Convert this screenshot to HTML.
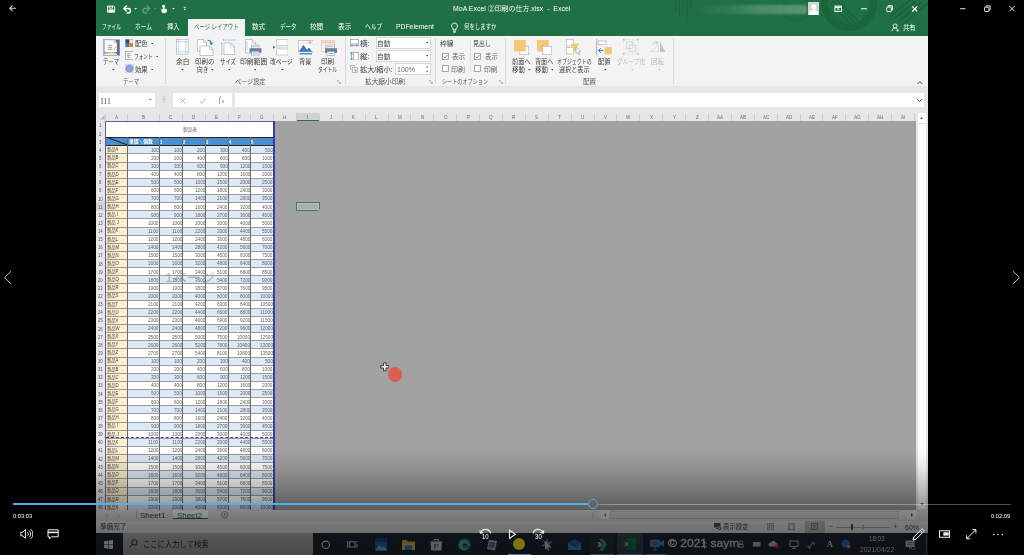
<!DOCTYPE html>
<html lang="ja"><head><meta charset="utf-8"><title>MoA Excel</title>
<style>
*{margin:0;padding:0;box-sizing:border-box}
html,body{width:1024px;height:555px;overflow:hidden;background:#000}
body{position:relative;font-family:"Liberation Sans","Noto Sans CJK JP",sans-serif;color:#444}
.a{position:absolute}
.t{position:absolute;white-space:nowrap;line-height:1;transform-origin:0 50%}
#vid{position:absolute;left:96px;top:0;width:832px;height:555px;background:#a2a2a2;overflow:hidden}
#vid .in{position:absolute;left:-96px;top:0;width:1024px;height:555px;will-change:transform;filter:blur(.35px)}
#pl{position:absolute;left:0;top:0;width:1024px;height:555px;will-change:transform}
.sep{position:absolute;width:1px;background:#d8d8d8;top:38px;height:46px}
</style></head><body>
<div id="vid"><div class="in">

<div class="a" style="left:96px;top:0;width:832px;height:35.800px;background:#1f7044"></div>
<svg class="a" style="left:700px;top:0" width="228" height="36" viewBox="0 0 228 36">
<circle cx="149" cy="3" r="24.500" fill="none" stroke="#1b643c" stroke-width="7"/>
<circle cx="96" cy="8" r="13" fill="none" stroke="#1e6c42" stroke-width="3"/>
<g stroke="#1b643c" stroke-width="1.700"><path d="M122 2l26 26M127 0l27 27M132 0l26 26M137 0l24 24M190 16l20-16M194 19l22-18M198 22l24-20M202 25l26-22"/></g>
</svg>
<div class="a" style="left:690px;top:4.800px;width:117px;height:9.400px;border-radius:3px;background:linear-gradient(90deg,rgba(255,255,255,0),rgba(255,255,255,.07) 30%,rgba(255,255,255,.2) 60%,rgba(255,255,255,.27));filter:blur(1.2px)"></div>
<svg class="a" style="left:670px;top:0" width="24" height="24" viewBox="0 0 24 24" stroke="#1b6840" stroke-width="1.300"><path d="M6 0v11M9.500 0v17M13 0v14M17 0v22M20.500 0v8"/></svg>
<svg class="a" style="left:96px;top:0" width="100" height="19" viewBox="96 0 100 19" fill="none" stroke="#fff">
<path d="M107.500 6.100h6.300l.8.800v5.200h-7.100z" stroke-width="1"/><path d="M109 6.100v2h3.600v-2" stroke-width=".9"/><path d="M108.800 12v-2.300h4.600V12z" fill="#fff" stroke-width=".6"/>
<path d="M124.600 8.400h3.500a2.300 2.300 0 0 1 0 4.600h-1.500" stroke-width="1.500"/><path d="M126.700 5.500l-2.900 2.900 2.900 2.900" stroke-width="1.400"/>
<path d="M134.400 8l1.300 1.500 1.300-1.500z" fill="#fff" stroke="none"/>
<g opacity=".32"><path d="M148.800 8.400h-3.500a2.300 2.300 0 0 0 0 4.600h1.500" stroke-width="1.400"/><path d="M146.700 5.500l2.900 2.900-2.900 2.900" stroke-width="1.300"/><path d="M154.400 8.100l1 1.100 1-1.100z" fill="#fff" stroke="none"/></g>
<circle cx="163.600" cy="6.300" r="1.500" fill="#fff" stroke="none"/><path d="M163.600 6.500v4.500" stroke-width="1.400"/><path d="M161.300 9.700l1.200 3h3.600l.8-3-3-1z" fill="#fff" stroke-width=".6"/>
<path d="M172.200 8l1.300 1.500 1.300-1.500z" fill="#fff" stroke="none"/>
<path d="M183.600 8.800l1.200 1.400 1.200-1.400z" fill="#fff" stroke="none"/><path d="M183.700 7.300h2.200" stroke-width=".8"/>
</svg>
<div class="t" style="left:452.85px;top:5px;font-size:7px;color:#fff;transform:scaleX(0.992);">MoA Excel ②印刷の仕方.xlsx&nbsp; -&nbsp; Excel</div>
<svg class="a" style="left:807.500px;top:1.900px" width="11.500" height="13.100" viewBox="0 0 11.500 13.100"><rect width="11.500" height="13.100" fill="#d4d4d4"/><circle cx="5.750" cy="4.700" r="2.500" fill="#fff"/><path d="M1.200 13.100c0-3.600 1.800-5.200 4.550-5.200s4.550 1.600 4.550 5.200z" fill="#fff"/></svg>
<svg class="a" style="left:828px;top:0" width="100" height="19" viewBox="828 0 100 19" fill="none" stroke="#fff" stroke-width="1">
<rect x="834.900" y="6.100" width="6.600" height="5.300"/><path d="M834.900 7.300h6.600" stroke-width="1.300"/><path d="M838.200 10.600V8.400M837 9.500l1.200-1.200 1.200 1.200" stroke-width=".8"/>
<path d="M861 8.750h5.900"/>
<rect x="886.700" y="7" width="4.600" height="4.600" rx=".8"/><path d="M888.100 7V5.700h4.200v4.400h-1"/>
<path d="M912.100 6.300l5.200 5.200M917.300 6.300l-5.200 5.200" stroke-width="1.100"/>
</svg>
<div class="a" style="left:188.200px;top:18.900px;width:56.800px;height:17px;background:#f3f3f3"></div>
<div class="t" style="left:194.07px;top:23px;font-size:7.2px;color:#217346;transform:scaleX(0.752);">ページ レイアウト</div>
<div class="t" style="left:102.19px;top:23px;font-size:7.2px;color:#fff;transform:scaleX(0.661);">ファイル</div>
<div class="t" style="left:135.45px;top:23px;font-size:7.2px;color:#fff;transform:scaleX(0.790);">ホーム</div>
<div class="t" style="left:166.93px;top:23px;font-size:7.2px;color:#fff;transform:scaleX(0.880);">挿入</div>
<div class="t" style="left:252.42px;top:23px;font-size:7.2px;color:#fff;transform:scaleX(0.921);">数式</div>
<div class="t" style="left:280.27px;top:23px;font-size:7.2px;color:#fff;transform:scaleX(0.770);">データ</div>
<div class="t" style="left:310.32px;top:23px;font-size:7.2px;color:#fff;transform:scaleX(0.919);">校閲</div>
<div class="t" style="left:337.52px;top:23px;font-size:7.2px;color:#fff;transform:scaleX(0.931);">表示</div>
<div class="t" style="left:364.65px;top:23px;font-size:7.2px;color:#fff;transform:scaleX(0.795);">ヘルプ</div>
<div class="t" style="left:395.78px;top:23px;font-size:7.2px;color:#fff;transform:scaleX(0.947);">PDFelement</div>
<div class="t" style="left:463.86px;top:23px;font-size:7.2px;color:#fff;transform:scaleX(0.753);">何をしますか</div>
<svg class="a" style="left:449px;top:21.500px" width="11" height="11" viewBox="0 0 11 11" fill="none" stroke="#fff" stroke-width=".9"><path d="M5.500 1a2.900 2.900 0 0 0-1.500 5.400V8h3V6.400A2.900 2.900 0 0 0 5.500 1z"/><path d="M4.200 9.300h2.600M4.600 10.400h1.800"/></svg>
<svg class="a"  style="left:891.300px;top:23px" width="9" height="9" viewBox="0 0 10 10" fill="none" stroke="#fff" stroke-width=".9"><circle cx="4.600" cy="3.300" r="2.200"/><path d="M1 9.200c.2-2.200 1.500-3.500 3.600-3.500 1 0 1.700.2 2.200.7M7.400 6.500v3.200M5.800 8.100h3.200"/></svg>
<div class="t" style="left:903.00px;top:25px;font-size:6.4px;color:#fff;transform:scaleX(0.996);">共有</div>
<div class="a" style="left:96px;top:35.800px;width:832px;height:50.400px;background:#f3f3f3"></div>
<div class="a" style="left:96px;top:86.200px;width:832px;height:27px;background:#e6e6e6"></div>
<svg class="a" style="left:102.600px;top:38.500px" width="17.400" height="17.200" viewBox="0 0 34.800 34.400">
<rect x="0" y="0" width="34.800" height="34.400" fill="#aab7c9"/>
<rect x="26" y="2" width="7" height="30" fill="#5b6b82"/>
<path d="M3 2h19l6 6v24H3z" fill="#fff" stroke="#9aa7b8" stroke-width="1"/>
<path d="M22 2v6h6" fill="#dfe5ee" stroke="#9aa7b8" stroke-width="1"/>
<path d="M9 13h10M9 17h10M9 21h10M12 11v12M16 11v12" stroke="#8a8a8a" stroke-width="1"/>
<path d="M22 22l4-7" stroke="#8a8a8a" stroke-width="1.200"/>
<rect x="3" y="26" width="3.600" height="3" fill="#2b7cd3"/><rect x="7.600" y="26" width="3.600" height="3" fill="#e8792b"/><rect x="12.200" y="26" width="3.600" height="3" fill="#e2b428"/><rect x="16.800" y="26" width="3.600" height="3" fill="#e2b428"/><rect x="21.400" y="26" width="3.600" height="3" fill="#56a64b"/><rect x="25" y="26" width="3" height="3" fill="#2b7cd3"/>
</svg>
<div class="t" style="left:103.44px;top:59px;font-size:6.5px;color:#3b3b3b;transform:scaleX(0.822);">テーマ</div>
<svg class="a" style="left:111.95px;top:69.10px" width="2.600" height="1.700" viewBox="0 0 4 2.400"><path d="M0 0h4L2 2.400z" fill="#4a4a4a"/></svg>
<svg class="a" style="left:124.700px;top:38.700px" width="8.600" height="8.500" viewBox="0 0 17.200 17"><rect x=".5" y=".5" width="16.200" height="16" fill="#e6e6e6" stroke="#9a9a9a"/><rect x="1" y="1" width="7.600" height="7" fill="#34466a"/><rect x="1" y="8" width="7.600" height="8" fill="#3e74c8"/><rect x="8.600" y="8" width="7.600" height="8" fill="#ee7d31"/></svg>
<div class="t" style="left:134.91px;top:41px;font-size:6.5px;color:#3b3b3b;transform:scaleX(0.976);">配色</div>
<svg class="a" style="left:150.9px;top:42.50px" width="2.600" height="1.700" viewBox="0 0 4 2.400"><path d="M0 0h4L2 2.400z" fill="#4a4a4a"/></svg>
<svg class="a" style="left:124.700px;top:51.400px" width="8.800" height="8.900" viewBox="0 0 17.600 17.800"><rect x=".7" y=".7" width="16.200" height="16.400" fill="#fdfdfd" stroke="#8a8a8a" stroke-width="1.200"/><path d="M4 5.600h9M4 9h9M4 12.400h9M6.500 4v10" stroke="#8e8e8e" stroke-width="1.100"/></svg>
<div class="t" style="left:134.43px;top:54px;font-size:6.5px;color:#3b3b3b;transform:scaleX(0.717);">フォント</div>
<svg class="a" style="left:155.9px;top:55.50px" width="2.600" height="1.700" viewBox="0 0 4 2.400"><path d="M0 0h4L2 2.400z" fill="#4a4a4a"/></svg>
<svg class="a" style="left:124.700px;top:64.300px" width="8.900" height="9.100" viewBox="0 0 17.800 18.200"><rect x=".5" y=".5" width="16.800" height="17.200" fill="#f6f6f6" stroke="#b5b5b5"/><circle cx="8.900" cy="9.100" r="7.300" fill="#8aa2e2" stroke="#6f8ad6"/></svg>
<div class="t" style="left:134.91px;top:67px;font-size:6.5px;color:#3b3b3b;transform:scaleX(0.976);">効果</div>
<svg class="a" style="left:150.9px;top:68.60px" width="2.600" height="1.700" viewBox="0 0 4 2.400"><path d="M0 0h4L2 2.400z" fill="#4a4a4a"/></svg>
<div class="t" style="left:122.63px;top:79px;font-size:6.4px;color:#555;transform:scaleX(0.838);">テーマ</div>
<div class="sep" style="left:165.200px"></div>
<svg class="a" style="left:176px;top:39.200px" width="12.500" height="15.500" viewBox="0 0 25 31" fill="none"><rect x=".7" y=".7" width="23.600" height="29.600" fill="#fff" stroke="#a8a8a8" stroke-width="1.200"/><path d="M5.500 1v29M19.500 1v29M1 5.500h23M1 25.500h23" stroke="#8bbbe6" stroke-width="1.100"/></svg>
<div class="t" style="left:175.69px;top:59px;font-size:6.5px;color:#3b3b3b;transform:scaleX(1.055);">余白</div>
<svg class="a" style="left:181px;top:69.10px" width="2.600" height="1.700" viewBox="0 0 4 2.400"><path d="M0 0h4L2 2.400z" fill="#4a4a4a"/></svg>
<svg class="a" style="left:197px;top:38.600px" width="16.600" height="17" viewBox="0 0 33.200 34" fill="none"><path d="M1 1h12l6 6v17H1z" fill="#fff" stroke="#a0a0a0" stroke-width="1.200"/><path d="M13 1v6h6" stroke="#a0a0a0" stroke-width="1"/><path d="M6 14h19l7 7v12H6z" fill="#fff" stroke="#a0a0a0" stroke-width="1.200"/><path d="M25 14v7h7" stroke="#a0a0a0" stroke-width="1"/><path d="M21 2.500c5 0 7.500 2.500 7.500 7" stroke="#2f75c0" stroke-width="2.400"/><path d="M24.500 7.500l4 5 4-5z" fill="#2f75c0"/></svg>
<div class="t" style="left:194.80px;top:59px;font-size:6.5px;color:#3b3b3b;transform:scaleX(0.997);">印刷の</div>
<div class="t" style="left:196.72px;top:67px;font-size:6.5px;color:#3b3b3b;transform:scaleX(0.870);">向き</div>
<svg class="a" style="left:211.2px;top:69.30px" width="2.600" height="1.700" viewBox="0 0 4 2.400"><path d="M0 0h4L2 2.400z" fill="#4a4a4a"/></svg>
<svg class="a" style="left:220.700px;top:39.200px" width="14.100" height="16.200" viewBox="0 0 28.200 32.400" fill="none"><path d="M5 2h22M5 0v4M27 0v4" stroke="#8bbbe6" stroke-width="1.200"/><path d="M1.500 8v23M0 8h3M0 31h3" stroke="#8bbbe6" stroke-width="1.200"/><path d="M6 8h13l8 8v15H6z" fill="#fff" stroke="#a0a0a0" stroke-width="1.200"/><path d="M19 8v8h8" stroke="#a0a0a0" stroke-width="1"/></svg>
<div class="t" style="left:219.54px;top:59px;font-size:6.5px;color:#3b3b3b;transform:scaleX(0.827);">サイズ</div>
<svg class="a" style="left:227.8px;top:69.10px" width="2.600" height="1.700" viewBox="0 0 4 2.400"><path d="M0 0h4L2 2.400z" fill="#4a4a4a"/></svg>
<svg class="a" style="left:245.400px;top:39.200px" width="17" height="16.400" viewBox="0 0 34 32.800" fill="none"><path d="M1 1h13l7 7v20H1z" fill="#fff" stroke="#a0a0a0" stroke-width="1.200"/><path d="M14 1v7h7" stroke="#a0a0a0" stroke-width="1"/><path d="M4 4v21" stroke="#8bbbe6" stroke-width="1.200"/><rect x="13" y="12" width="15" height="8" fill="#fff" stroke="#8a8a8a" stroke-width="1.100"/><rect x="9" y="18.500" width="24" height="9" fill="#6d7f99"/><rect x="13" y="24.500" width="15" height="7.500" fill="#fff" stroke="#8a8a8a" stroke-width="1.100"/><path d="M15 15.500h11M15 28h11" stroke="#4a8fd0" stroke-width="1.200"/></svg>
<div class="t" style="left:239.77px;top:59px;font-size:6.5px;color:#3b3b3b;transform:scaleX(1.046);">印刷範囲</div>
<svg class="a" style="left:253.7px;top:69.10px" width="2.600" height="1.700" viewBox="0 0 4 2.400"><path d="M0 0h4L2 2.400z" fill="#4a4a4a"/></svg>
<svg class="a" style="left:272.700px;top:39.200px" width="15.600" height="16.400" viewBox="0 0 31.200 32.800" fill="none"><path d="M7 1h23v12H7z" fill="#fff" stroke="#b0b0b0" stroke-width="1.200"/><path d="M7 20h23v12H7z" fill="#fff" stroke="#b0b0b0" stroke-width="1.200"/><path d="M6 16.500h25" stroke="#bdbdbd" stroke-width="1"/><path d="M0 13l5 3.500-5 3.500z" fill="#2f75c0"/></svg>
<div class="t" style="left:269.51px;top:59px;font-size:6.5px;color:#3b3b3b;transform:scaleX(0.884);">改ページ</div>
<svg class="a" style="left:281.4px;top:69.10px" width="2.600" height="1.700" viewBox="0 0 4 2.400"><path d="M0 0h4L2 2.400z" fill="#4a4a4a"/></svg>
<svg class="a" style="left:297.500px;top:39.900px" width="15.500" height="14.800" viewBox="0 0 31 29.600" fill="none"><rect x=".6" y=".6" width="29.800" height="23" fill="#fff" stroke="#a8a8a8" stroke-width="1.200"/><path d="M1 7h29M10 1v6M20 1v6" stroke="#c4c4c4" stroke-width=".9"/><circle cx="24" cy="4.600" r="2.400" fill="#f0b22a"/><path d="M1.500 23.500l9.500-14 7 10 3.500-4.500 7.500 8.500z" fill="#3b78bd"/><path d="M3 26h25v3H3z" fill="#5a8fcc"/></svg>
<div class="t" style="left:299.41px;top:59px;font-size:6.5px;color:#3b3b3b;transform:scaleX(0.944);">背景</div>
<svg class="a" style="left:320.700px;top:39.900px" width="16.600" height="15.800" viewBox="0 0 33.200 31.600" fill="none"><rect x=".6" y=".6" width="26" height="22" fill="#fff" stroke="#b5b5b5" stroke-width="1.100"/><rect x="1" y="1" width="25" height="5" fill="#f6d9c8"/><path d="M1 6h25M1 11h25M1 16h25M9 1v21M18 1v21" stroke="#e8a888" stroke-width="1"/><rect x="12" y="10" width="15" height="8" fill="#fff" stroke="#8a8a8a" stroke-width="1.100"/><rect x="8" y="16.500" width="24" height="9.500" fill="#6d7f99"/><rect x="12" y="23" width="15" height="8" fill="#fff" stroke="#8a8a8a" stroke-width="1.100"/><path d="M14 13.500h11M14 27h11" stroke="#4a8fd0" stroke-width="1.200"/></svg>
<div class="t" style="left:321.40px;top:59px;font-size:6.5px;color:#3b3b3b;transform:scaleX(1.004);">印刷</div>
<div class="t" style="left:318.40px;top:67px;font-size:6.5px;color:#3b3b3b;transform:scaleX(0.736);">タイトル</div>
<div class="t" style="left:234.67px;top:79px;font-size:6.4px;color:#555;transform:scaleX(0.958);">ページ設定</div>
<svg class="a" style="left:337.4px;top:80.2px" width="3.600" height="3.600" viewBox="0 0 7 7" fill="none" stroke="#777" stroke-width="1"><path d="M.5 4V.5H4M3 3l3.500 3.500M6.500 3.800v2.700H3.800"/></svg>
<div class="sep" style="left:344.500px"></div>
<svg class="a" style="left:350px;top:39.200px" width="8.800" height="8" viewBox="0 0 17.600 16" fill="none"><rect x=".8" y=".8" width="16" height="9" fill="#fff" stroke="#8a8a8a" stroke-width="1.200"/><path d="M1 13h15.600M1 10.500v5M16.600 10.500v5M6 11.500l-3 1.500 3 1.500M11.600 11.500l3 1.500-3 1.500" stroke="#2f75c0" stroke-width="1.100"/></svg>
<div class="t" style="left:360.46px;top:41px;font-size:6.5px;color:#3b3b3b;transform:scaleX(1.173);">横:</div>
<div class="a" style="left:375.6px;top:37.4px;width:55.7px;height:11.9px;background:#fff;border:1px solid #d6d6d6"></div>
<div class="t" style="left:377.12px;top:41px;font-size:6.5px;color:#3b3b3b;transform:scaleX(1.030);">自動</div>
<svg class="a" style="left:425.9px;top:42.40px" width="2.600" height="1.700" viewBox="0 0 4 2.400"><path d="M0 0h4L2 2.400z" fill="#4a4a4a"/></svg>
<svg class="a" style="left:350px;top:51.700px" width="8.800" height="8.400" viewBox="0 0 17.600 16.800" fill="none"><rect x="7" y=".8" width="9.800" height="15.200" fill="#fff" stroke="#8a8a8a" stroke-width="1.200"/><path d="M3 1v15M.5 1h5M.5 16h5M1.500 5l1.500-3 1.500 3M1.500 12l1.500 3 1.500-3" stroke="#2f75c0" stroke-width="1.100"/></svg>
<div class="t" style="left:360.46px;top:54px;font-size:6.5px;color:#3b3b3b;transform:scaleX(1.173);">縦:</div>
<div class="a" style="left:375.6px;top:50.2px;width:55.7px;height:12px;background:#fff;border:1px solid #d6d6d6"></div>
<div class="t" style="left:377.12px;top:54px;font-size:6.5px;color:#3b3b3b;transform:scaleX(1.030);">自動</div>
<svg class="a" style="left:425.9px;top:55.30px" width="2.600" height="1.700" viewBox="0 0 4 2.400"><path d="M0 0h4L2 2.400z" fill="#4a4a4a"/></svg>
<svg class="a" style="left:350px;top:65px" width="7.600" height="7.800" viewBox="0 0 15.200 15.600" fill="none"><rect x=".7" y=".7" width="7.600" height="7.600" fill="#fff" stroke="#8a8a8a" stroke-width="1.100"/><rect x="5" y="5" width="9.500" height="9.800" fill="#fff" stroke="#8a8a8a" stroke-width="1.100"/><path d="M8 8l4 4M12.400 9v3.400H9" stroke="#2f75c0" stroke-width="1.200"/></svg>
<div class="t" style="left:360.48px;top:67px;font-size:6.5px;color:#3b3b3b;transform:scaleX(1.099);">拡大/縮小:</div>
<div class="a" style="left:395.2px;top:63px;width:36.1px;height:12.3px;background:#fff;border:1px solid #d6d6d6"></div>
<div class="t" style="left:396.71px;top:67px;font-size:6.5px;color:#6a6a6a;transform:scaleX(1.087);">100%</div>
<svg class="a" style="left:425.500px;top:65.800px" width="2.400" height="6.400" viewBox="0 0 3.400 9"><path d="M0 2.200h3.400L1.700 0zM0 6.800h3.400L1.700 9z" fill="#555"/></svg>
<div class="t" style="left:365.49px;top:79px;font-size:6.4px;color:#555;transform:scaleX(1.043);">拡大縮小印刷</div>
<svg class="a" style="left:429.2px;top:80.2px" width="3.600" height="3.600" viewBox="0 0 7 7" fill="none" stroke="#777" stroke-width="1"><path d="M.5 4V.5H4M3 3l3.500 3.500M6.500 3.800v2.700H3.800"/></svg>
<div class="sep" style="left:435.400px"></div>
<div class="t" style="left:439.89px;top:41px;font-size:6.5px;color:#3b3b3b;transform:scaleX(1.024);">枠線</div>
<div class="t" style="left:473.42px;top:41px;font-size:6.5px;color:#3b3b3b;transform:scaleX(0.908);">見出し</div>
<div class="a" style="left:470.400px;top:39.600px;width:1px;height:32px;background:#e2e2e2"></div>
<svg class="a" style="left:441.8px;top:52.7px" width="7" height="7" viewBox="0 0 14 14" fill="none"><rect x=".8" y=".8" width="12.400" height="12.400" fill="#fff" stroke="#7a7a7a" stroke-width="1.300"/><path d="M3 7l3 3 5-6.500" stroke="#555" stroke-width="1.400"/></svg>
<div class="t" style="left:451.90px;top:54px;font-size:6.5px;color:#666;transform:scaleX(1.008);">表示</div>
<svg class="a" style="left:474.4px;top:52.7px" width="7" height="7" viewBox="0 0 14 14" fill="none"><rect x=".8" y=".8" width="12.400" height="12.400" fill="#fff" stroke="#7a7a7a" stroke-width="1.300"/><path d="M3 7l3 3 5-6.500" stroke="#555" stroke-width="1.400"/></svg>
<div class="t" style="left:485.00px;top:54px;font-size:6.5px;color:#666;transform:scaleX(0.984);">表示</div>
<svg class="a" style="left:441.8px;top:65.4px" width="7" height="7" viewBox="0 0 14 14" fill="none"><rect x=".8" y=".8" width="12.400" height="12.400" fill="#fff" stroke="#7a7a7a" stroke-width="1.300"/></svg>
<div class="t" style="left:451.35px;top:67px;font-size:6.5px;color:#666;transform:scaleX(1.072);">印刷</div>
<svg class="a" style="left:474.4px;top:65.4px" width="7" height="7" viewBox="0 0 14 14" fill="none"><rect x=".8" y=".8" width="12.400" height="12.400" fill="#fff" stroke="#7a7a7a" stroke-width="1.300"/></svg>
<div class="t" style="left:484.46px;top:67px;font-size:6.5px;color:#666;transform:scaleX(1.047);">印刷</div>
<div class="t" style="left:442.35px;top:79px;font-size:6.4px;color:#555;transform:scaleX(0.800);">シートのオプション</div>
<svg class="a" style="left:499.2px;top:80.2px" width="3.600" height="3.600" viewBox="0 0 7 7" fill="none" stroke="#777" stroke-width="1"><path d="M.5 4V.5H4M3 3l3.500 3.500M6.500 3.800v2.700H3.800"/></svg>
<div class="sep" style="left:505.400px"></div>
<svg class="a" style="left:513.700px;top:39.500px" width="15.200" height="15.200" viewBox="0 0 30.400 30.400"><rect x="11.600" y="12.600" width="18" height="17" fill="#fff" stroke="#a8a8a8" stroke-width="1.200"/><rect x="0" y="0" width="23.600" height="22.600" fill="#f2c877"/></svg>
<div class="t" style="left:512.21px;top:59px;font-size:6.5px;color:#3b3b3b;transform:scaleX(0.947);">前面へ</div>
<div class="t" style="left:512.20px;top:67px;font-size:6.5px;color:#3b3b3b;transform:scaleX(0.992);">移動</div>
<svg class="a" style="left:528.1px;top:69.30px" width="2.600" height="1.700" viewBox="0 0 4 2.400"><path d="M0 0h4L2 2.400z" fill="#4a4a4a"/></svg>
<svg class="a" style="left:536.800px;top:39.500px" width="15.200" height="15.200" viewBox="0 0 30.400 30.400"><rect x="0" y="0" width="23.600" height="22.600" fill="#f2c877"/><rect x="11.600" y="12.600" width="18" height="17" fill="#fff" stroke="#a8a8a8" stroke-width="1.200"/></svg>
<div class="t" style="left:534.92px;top:59px;font-size:6.5px;color:#3b3b3b;transform:scaleX(0.937);">背面へ</div>
<div class="t" style="left:534.90px;top:67px;font-size:6.5px;color:#3b3b3b;transform:scaleX(0.992);">移動</div>
<svg class="a" style="left:551px;top:69.30px" width="2.600" height="1.700" viewBox="0 0 4 2.400"><path d="M0 0h4L2 2.400z" fill="#4a4a4a"/></svg>
<svg class="a" style="left:566.200px;top:39.200px" width="15.400" height="16.400" viewBox="0 0 30.800 32.800" fill="none"><rect x=".7" y=".7" width="14" height="13" fill="#fff" stroke="#b0b0b0" stroke-width="1.200"/><rect x=".7" y="17" width="14" height="13" fill="#fff" stroke="#b0b0b0" stroke-width="1.200"/><path d="M10 9h15v6h-4v9h-6v-9h-5z" fill="#f2c877"/><path d="M20 16v13l3-2.600 2.200 5 2.400-1-2.200-5h4.400z" fill="#fff" stroke="#8a8a8a" stroke-width="1.100"/></svg>
<div class="t" style="left:556.67px;top:59px;font-size:6.5px;color:#3b3b3b;transform:scaleX(0.760);">オブジェクトの</div>
<div class="t" style="left:558.91px;top:67px;font-size:6.5px;color:#3b3b3b;transform:scaleX(0.941);">選択と表示</div>
<svg class="a" style="left:596.200px;top:39.200px" width="15.800" height="16.400" viewBox="0 0 31.600 32.800" fill="none"><path d="M1.200 0v32.800" stroke="#9a9a9a" stroke-width="1.600"/><rect x="5" y="4" width="15" height="7" fill="#fff" stroke="#a8a8a8" stroke-width="1.200"/><rect x="17" y="16" width="14.600" height="14.600" fill="#f2c877"/><path d="M15 23H5M9.500 18.500L5 23l4.500 4.500" stroke="#2f75c0" stroke-width="2"/></svg>
<div class="t" style="left:598.01px;top:59px;font-size:6.5px;color:#3b3b3b;transform:scaleX(0.976);">配置</div>
<svg class="a" style="left:604.3px;top:69.10px" width="2.600" height="1.700" viewBox="0 0 4 2.400"><path d="M0 0h4L2 2.400z" fill="#4a4a4a"/></svg>
<svg class="a" style="left:623px;top:39.200px" width="15.800" height="16.400" viewBox="0 0 31.600 32.800" fill="none" stroke="#c6c6c6" stroke-width="1.200"><rect x="1.500" y="1.500" width="28.600" height="28.600" stroke-dasharray="2.500 3"/><rect x="7" y="6" width="13" height="13"/><rect x="12.500" y="12" width="13" height="13"/><g fill="#bdbdbd" stroke="none"><rect x="0" y="0" width="3" height="3"/><rect x="28.600" y="0" width="3" height="3"/><rect x="0" y="28.600" width="3" height="3"/><rect x="28.600" y="28.600" width="3" height="3"/></g></svg>
<div class="t" style="left:616.61px;top:59px;font-size:6.5px;color:#b8b8b8;transform:scaleX(0.883);">グループ化</div>
<svg class="a" style="left:631.1px;top:69.10px" width="2.600" height="1.700" viewBox="0 0 4 2.400"><path d="M0 0h4L2 2.400z" fill="#c8c8c8"/></svg>
<svg class="a" style="left:650px;top:40.600px" width="15.600" height="11.200" viewBox="0 0 31.200 22.400" fill="none"><path d="M20 2l11 20H20z" fill="#c4c4c4"/><path d="M17 8L1 21.500h16z" stroke="#d0d0d0" stroke-width="1.200"/><path d="M5 7c2-4 6-5.500 10-3.500M12.500.5l3.500 3.500-4.500 2.500" stroke="#bdbdbd" stroke-width="1.700"/></svg>
<div class="t" style="left:650.85px;top:59px;font-size:6.5px;color:#b8b8b8;transform:scaleX(1.004);">回転</div>
<svg class="a" style="left:658px;top:69.10px" width="2.600" height="1.700" viewBox="0 0 4 2.400"><path d="M0 0h4L2 2.400z" fill="#c8c8c8"/></svg>
<div class="t" style="left:582.59px;top:79px;font-size:6.4px;color:#555;transform:scaleX(1.029);">配置</div>
<div class="sep" style="left:673px"></div>
<svg class="a" style="left:917.400px;top:80.900px" width="5.800" height="3.600" viewBox="0 0 5.800 3.600" fill="none" stroke="#505050" stroke-width="1"><path d="M.4 3.200L2.900.6l2.500 2.600"/></svg>
<div class="a" style="left:99px;top:93px;width:56px;height:14.200px;background:#fff"></div>
<div class="t" style="left:100.70px;top:98px;font-size:7.8px;font-family:'Liberation Serif','Noto Serif CJK JP',serif;color:#555;transform:scaleX(1.000);">I11</div>
<svg class="a" style="left:149px;top:98.800px" width="2.600" height="1.600" viewBox="0 0 3.400 2"><path d="M0 0h3.400L1.700 2z" fill="#666"/></svg>
<svg class="a" style="left:162.500px;top:96.300px" width="2" height="7" viewBox="0 0 2 7" fill="#999"><circle cx="1" cy="1" r=".6"/><circle cx="1" cy="3.400" r=".6"/><circle cx="1" cy="5.800" r=".6"/></svg>
<div class="a" style="left:172.500px;top:93px;width:59.700px;height:14.200px;background:#fff"></div>
<svg class="a" style="left:178.500px;top:96.500px" width="50" height="8" viewBox="0 0 50 8" fill="none" stroke="#b0b0b0" stroke-width=".9"><path d="M1 1l5.400 5.400M6.400 1L1 6.400"/><path d="M20.800 4l2 2.400 4-5.200"/></svg>
<div class="t" style="left:218.95px;top:95px;font-size:8.6px;font-family:'Liberation Serif','Noto Serif CJK JP',serif;font-style:italic;color:#444;transform:scaleX(0.600);">f</div>
<div class="t" style="left:221.95px;top:98px;font-size:6px;font-family:'Liberation Serif','Noto Serif CJK JP',serif;font-style:italic;color:#444;transform:scaleX(0.727);">x</div>
<div class="a" style="left:234.700px;top:93px;width:689.600px;height:14.200px;background:#fff"></div>
<svg class="a" style="left:917.300px;top:98.500px" width="5" height="3.400" viewBox="0 0 5 3.400" fill="none" stroke="#444" stroke-width="1"><path d="M.4.400l2.100 2.200L4.600.4"/></svg>
<div class="a" style="left:96px;top:113px;width:820px;height:8.100px;background:#e6e6e6"></div>
<svg class="a" style="left:100.300px;top:115.300px" width="4.600" height="4.600" viewBox="0 0 5 5"><path d="M5 0v5H0z" fill="#b7b7b7"/></svg>
<div class="a" style="left:105.20px;top:114px;width:1px;height:7px;background:#cdcdcd"></div>
<div class="t" style="left:115.11px;top:115px;font-size:5.2px;color:#6a6a6a;transform:scaleX(0.880);">A</div>
<div class="a" style="left:127.10px;top:114px;width:1px;height:7px;background:#cdcdcd"></div>
<div class="t" style="left:141.65px;top:115px;font-size:5.2px;color:#6a6a6a;transform:scaleX(0.880);">B</div>
<div class="a" style="left:158.50px;top:114px;width:1px;height:7px;background:#cdcdcd"></div>
<div class="t" style="left:169.20px;top:115px;font-size:5.2px;color:#6a6a6a;transform:scaleX(0.880);">C</div>
<div class="a" style="left:182.20px;top:114px;width:1px;height:7px;background:#cdcdcd"></div>
<div class="t" style="left:192.34px;top:115px;font-size:5.2px;color:#6a6a6a;transform:scaleX(0.880);">D</div>
<div class="a" style="left:205.00px;top:114px;width:1px;height:7px;background:#cdcdcd"></div>
<div class="t" style="left:215.30px;top:115px;font-size:5.2px;color:#6a6a6a;transform:scaleX(0.880);">E</div>
<div class="a" style="left:227.90px;top:114px;width:1px;height:7px;background:#cdcdcd"></div>
<div class="t" style="left:237.91px;top:115px;font-size:5.2px;color:#6a6a6a;transform:scaleX(0.880);">F</div>
<div class="a" style="left:250.00px;top:114px;width:1px;height:7px;background:#cdcdcd"></div>
<div class="t" style="left:260.14px;top:115px;font-size:5.2px;color:#6a6a6a;transform:scaleX(0.880);">G</div>
<div class="a" style="left:272.80px;top:114px;width:1px;height:7px;background:#cdcdcd"></div>
<div class="t" style="left:283.25px;top:115px;font-size:5.2px;color:#6a6a6a;transform:scaleX(0.880);">H</div>
<div class="a" style="left:296.49px;top:113px;width:22.89px;height:8.100px;background:#d2d2d2;border-bottom:1px solid #217346"></div>
<div class="a" style="left:295.99px;top:114px;width:1px;height:7px;background:#cdcdcd"></div>
<div class="t" style="left:307.27px;top:115px;font-size:5.2px;color:#217346;transform:scaleX(0.880);">I</div>
<div class="a" style="left:318.88px;top:114px;width:1px;height:7px;background:#cdcdcd"></div>
<div class="t" style="left:329.83px;top:115px;font-size:5.2px;color:#6a6a6a;transform:scaleX(0.880);">J</div>
<div class="a" style="left:341.77px;top:114px;width:1px;height:7px;background:#cdcdcd"></div>
<div class="t" style="left:352.07px;top:115px;font-size:5.2px;color:#6a6a6a;transform:scaleX(0.880);">K</div>
<div class="a" style="left:364.66px;top:114px;width:1px;height:7px;background:#cdcdcd"></div>
<div class="t" style="left:375.18px;top:115px;font-size:5.2px;color:#6a6a6a;transform:scaleX(0.880);">L</div>
<div class="a" style="left:387.55px;top:114px;width:1px;height:7px;background:#cdcdcd"></div>
<div class="t" style="left:397.51px;top:115px;font-size:5.2px;color:#6a6a6a;transform:scaleX(0.880);">M</div>
<div class="a" style="left:410.44px;top:114px;width:1px;height:7px;background:#cdcdcd"></div>
<div class="t" style="left:420.74px;top:115px;font-size:5.2px;color:#6a6a6a;transform:scaleX(0.880);">N</div>
<div class="a" style="left:433.33px;top:114px;width:1px;height:7px;background:#cdcdcd"></div>
<div class="t" style="left:443.51px;top:115px;font-size:5.2px;color:#6a6a6a;transform:scaleX(0.880);">O</div>
<div class="a" style="left:456.22px;top:114px;width:1px;height:7px;background:#cdcdcd"></div>
<div class="t" style="left:466.52px;top:115px;font-size:5.2px;color:#6a6a6a;transform:scaleX(0.880);">P</div>
<div class="a" style="left:479.11px;top:114px;width:1px;height:7px;background:#cdcdcd"></div>
<div class="t" style="left:489.30px;top:115px;font-size:5.2px;color:#6a6a6a;transform:scaleX(0.880);">Q</div>
<div class="a" style="left:502.00px;top:114px;width:1px;height:7px;background:#cdcdcd"></div>
<div class="t" style="left:512.18px;top:115px;font-size:5.2px;color:#6a6a6a;transform:scaleX(0.880);">R</div>
<div class="a" style="left:524.89px;top:114px;width:1px;height:7px;background:#cdcdcd"></div>
<div class="t" style="left:535.30px;top:115px;font-size:5.2px;color:#6a6a6a;transform:scaleX(0.880);">S</div>
<div class="a" style="left:547.78px;top:114px;width:1px;height:7px;background:#cdcdcd"></div>
<div class="t" style="left:558.40px;top:115px;font-size:5.2px;color:#6a6a6a;transform:scaleX(0.880);">T</div>
<div class="a" style="left:570.67px;top:114px;width:1px;height:7px;background:#cdcdcd"></div>
<div class="t" style="left:580.97px;top:115px;font-size:5.2px;color:#6a6a6a;transform:scaleX(0.880);">U</div>
<div class="a" style="left:593.56px;top:114px;width:1px;height:7px;background:#cdcdcd"></div>
<div class="t" style="left:603.97px;top:115px;font-size:5.2px;color:#6a6a6a;transform:scaleX(0.880);">V</div>
<div class="a" style="left:616.45px;top:114px;width:1px;height:7px;background:#cdcdcd"></div>
<div class="t" style="left:626.30px;top:115px;font-size:5.2px;color:#6a6a6a;transform:scaleX(0.880);">W</div>
<div class="a" style="left:639.34px;top:114px;width:1px;height:7px;background:#cdcdcd"></div>
<div class="t" style="left:649.75px;top:115px;font-size:5.2px;color:#6a6a6a;transform:scaleX(0.880);">X</div>
<div class="a" style="left:662.23px;top:114px;width:1px;height:7px;background:#cdcdcd"></div>
<div class="t" style="left:672.63px;top:115px;font-size:5.2px;color:#6a6a6a;transform:scaleX(0.880);">Y</div>
<div class="a" style="left:685.12px;top:114px;width:1px;height:7px;background:#cdcdcd"></div>
<div class="t" style="left:695.64px;top:115px;font-size:5.2px;color:#6a6a6a;transform:scaleX(0.880);">Z</div>
<div class="a" style="left:708.01px;top:114px;width:1px;height:7px;background:#cdcdcd"></div>
<div class="t" style="left:716.87px;top:115px;font-size:5.2px;color:#6a6a6a;transform:scaleX(0.880);">AA</div>
<div class="a" style="left:730.90px;top:114px;width:1px;height:7px;background:#cdcdcd"></div>
<div class="t" style="left:739.88px;top:115px;font-size:5.2px;color:#6a6a6a;transform:scaleX(0.880);">AB</div>
<div class="a" style="left:753.79px;top:114px;width:1px;height:7px;background:#cdcdcd"></div>
<div class="t" style="left:762.65px;top:115px;font-size:5.2px;color:#6a6a6a;transform:scaleX(0.880);">AC</div>
<div class="a" style="left:776.68px;top:114px;width:1px;height:7px;background:#cdcdcd"></div>
<div class="t" style="left:785.54px;top:115px;font-size:5.2px;color:#6a6a6a;transform:scaleX(0.880);">AD</div>
<div class="a" style="left:799.57px;top:114px;width:1px;height:7px;background:#cdcdcd"></div>
<div class="t" style="left:808.55px;top:115px;font-size:5.2px;color:#6a6a6a;transform:scaleX(0.880);">AE</div>
<div class="a" style="left:822.46px;top:114px;width:1px;height:7px;background:#cdcdcd"></div>
<div class="t" style="left:831.54px;top:115px;font-size:5.2px;color:#6a6a6a;transform:scaleX(0.880);">AF</div>
<div class="a" style="left:845.35px;top:114px;width:1px;height:7px;background:#cdcdcd"></div>
<div class="t" style="left:854.11px;top:115px;font-size:5.2px;color:#6a6a6a;transform:scaleX(0.880);">AG</div>
<div class="a" style="left:868.24px;top:114px;width:1px;height:7px;background:#cdcdcd"></div>
<div class="t" style="left:877.21px;top:115px;font-size:5.2px;color:#6a6a6a;transform:scaleX(0.880);">AH</div>
<div class="a" style="left:891.13px;top:114px;width:1px;height:7px;background:#cdcdcd"></div>
<div class="t" style="left:901.10px;top:115px;font-size:5.2px;color:#6a6a6a;transform:scaleX(0.880);">AI</div>
<div class="a" style="left:914.02px;top:114px;width:1px;height:7px;background:#cdcdcd"></div>
<div class="a" style="left:96px;top:121.2px;width:9.500px;height:388.500px;background:#e6e6e6"></div>
<div class="t" style="left:99.43px;top:123px;font-size:5px;color:#555;transform:scaleX(0.850);">1</div>
<div class="t" style="left:99.43px;top:132px;font-size:5px;color:#555;transform:scaleX(0.850);">2</div>
<div class="t" style="left:99.43px;top:140px;font-size:5px;color:#555;transform:scaleX(0.850);">3</div>
<div class="t" style="left:99.43px;top:148px;font-size:5px;color:#555;transform:scaleX(0.850);">4</div>
<div class="t" style="left:99.43px;top:156px;font-size:5px;color:#555;transform:scaleX(0.850);">5</div>
<div class="t" style="left:99.43px;top:164px;font-size:5px;color:#555;transform:scaleX(0.850);">6</div>
<div class="t" style="left:99.43px;top:172px;font-size:5px;color:#555;transform:scaleX(0.850);">7</div>
<div class="t" style="left:99.43px;top:180px;font-size:5px;color:#555;transform:scaleX(0.850);">8</div>
<div class="t" style="left:99.43px;top:188px;font-size:5px;color:#555;transform:scaleX(0.850);">9</div>
<div class="t" style="left:98.26px;top:197px;font-size:5px;color:#555;transform:scaleX(0.850);">10</div>
<div class="a" style="left:96px;top:202.45px;width:9.500px;height:8.125px;background:#d2d2d2;border-right:1px solid #217346"></div>
<div class="t" style="left:98.37px;top:205px;font-size:5px;color:#217346;transform:scaleX(0.850);">11</div>
<div class="t" style="left:98.26px;top:213px;font-size:5px;color:#555;transform:scaleX(0.850);">12</div>
<div class="t" style="left:98.26px;top:221px;font-size:5px;color:#555;transform:scaleX(0.850);">13</div>
<div class="t" style="left:98.16px;top:229px;font-size:5px;color:#555;transform:scaleX(0.850);">14</div>
<div class="t" style="left:98.26px;top:237px;font-size:5px;color:#555;transform:scaleX(0.850);">15</div>
<div class="t" style="left:98.26px;top:245px;font-size:5px;color:#555;transform:scaleX(0.850);">16</div>
<div class="t" style="left:98.26px;top:253px;font-size:5px;color:#555;transform:scaleX(0.850);">17</div>
<div class="t" style="left:98.26px;top:262px;font-size:5px;color:#555;transform:scaleX(0.850);">18</div>
<div class="t" style="left:98.26px;top:270px;font-size:5px;color:#555;transform:scaleX(0.850);">19</div>
<div class="t" style="left:98.26px;top:278px;font-size:5px;color:#555;transform:scaleX(0.850);">20</div>
<div class="t" style="left:98.26px;top:286px;font-size:5px;color:#555;transform:scaleX(0.850);">21</div>
<div class="t" style="left:98.26px;top:294px;font-size:5px;color:#555;transform:scaleX(0.850);">22</div>
<div class="t" style="left:98.26px;top:302px;font-size:5px;color:#555;transform:scaleX(0.850);">23</div>
<div class="t" style="left:98.16px;top:310px;font-size:5px;color:#555;transform:scaleX(0.850);">24</div>
<div class="t" style="left:98.26px;top:318px;font-size:5px;color:#555;transform:scaleX(0.850);">25</div>
<div class="t" style="left:98.26px;top:327px;font-size:5px;color:#555;transform:scaleX(0.850);">26</div>
<div class="t" style="left:98.26px;top:335px;font-size:5px;color:#555;transform:scaleX(0.850);">27</div>
<div class="t" style="left:98.26px;top:343px;font-size:5px;color:#555;transform:scaleX(0.850);">28</div>
<div class="t" style="left:98.26px;top:351px;font-size:5px;color:#555;transform:scaleX(0.850);">29</div>
<div class="t" style="left:98.26px;top:359px;font-size:5px;color:#555;transform:scaleX(0.850);">30</div>
<div class="t" style="left:98.26px;top:367px;font-size:5px;color:#555;transform:scaleX(0.850);">31</div>
<div class="t" style="left:98.26px;top:375px;font-size:5px;color:#555;transform:scaleX(0.850);">32</div>
<div class="t" style="left:98.26px;top:383px;font-size:5px;color:#555;transform:scaleX(0.850);">33</div>
<div class="t" style="left:98.16px;top:392px;font-size:5px;color:#555;transform:scaleX(0.850);">34</div>
<div class="t" style="left:98.26px;top:400px;font-size:5px;color:#555;transform:scaleX(0.850);">35</div>
<div class="t" style="left:98.26px;top:408px;font-size:5px;color:#555;transform:scaleX(0.850);">36</div>
<div class="t" style="left:98.26px;top:416px;font-size:5px;color:#555;transform:scaleX(0.850);">37</div>
<div class="t" style="left:98.26px;top:424px;font-size:5px;color:#555;transform:scaleX(0.850);">38</div>
<div class="t" style="left:98.26px;top:432px;font-size:5px;color:#555;transform:scaleX(0.850);">39</div>
<div class="t" style="left:98.37px;top:440px;font-size:5px;color:#555;transform:scaleX(0.850);">40</div>
<div class="t" style="left:98.37px;top:448px;font-size:5px;color:#555;transform:scaleX(0.850);">41</div>
<div class="t" style="left:98.37px;top:457px;font-size:5px;color:#555;transform:scaleX(0.850);">42</div>
<div class="t" style="left:98.37px;top:465px;font-size:5px;color:#555;transform:scaleX(0.850);">43</div>
<div class="t" style="left:98.26px;top:473px;font-size:5px;color:#555;transform:scaleX(0.850);">44</div>
<div class="t" style="left:98.37px;top:481px;font-size:5px;color:#555;transform:scaleX(0.850);">45</div>
<div class="t" style="left:98.37px;top:489px;font-size:5px;color:#555;transform:scaleX(0.850);">46</div>
<div class="t" style="left:98.37px;top:497px;font-size:5px;color:#555;transform:scaleX(0.850);">47</div>
<div class="t" style="left:98.37px;top:505px;font-size:5px;color:#555;transform:scaleX(0.850);">48</div>
<div class="a" style="left:105.7px;top:121.2px;width:167.60000000000002px;height:390px;background:#fff"></div>
<div class="t" style="left:182.51px;top:128px;font-size:4.9px;color:#555;transform:scaleX(0.961);">製品表</div>
<div class="a" style="left:105.7px;top:137.45px;width:167.60000000000002px;height:8.125px;background:#4a8fd2"></div>
<svg class="a" style="left:105.7px;top:137.45px" width="21.9" height="8.125" viewBox="0 0 21.900 8.140"><path d="M0 0L21.900 8.140" stroke="#1a1a1a" stroke-width="1"/></svg>
<div class="t" style="left:129.10px;top:140px;font-size:4.8px;font-weight:bold;color:#fff;transform:scaleX(0.991);">単価＼個数</div>
<div class="t" style="left:159.69px;top:141px;font-size:4.9px;font-weight:bold;color:#fff;transform:scaleX(0.850);">1</div>
<div class="t" style="left:183.39px;top:141px;font-size:4.9px;font-weight:bold;color:#fff;transform:scaleX(0.850);">2</div>
<div class="t" style="left:206.19px;top:141px;font-size:4.9px;font-weight:bold;color:#fff;transform:scaleX(0.850);">3</div>
<div class="t" style="left:229.30px;top:141px;font-size:4.9px;font-weight:bold;color:#fff;transform:scaleX(0.850);">4</div>
<div class="t" style="left:251.19px;top:141px;font-size:4.9px;font-weight:bold;color:#fff;transform:scaleX(0.850);">5</div>
<div class="a" style="left:127.6px;top:145.57px;width:145.7px;height:8.125px;background:#dce9f7"></div>
<div class="a" style="left:105.7px;top:145.57px;width:21.9px;height:8.125px;background:#fdf0cf"></div>
<div class="t" style="left:106.78px;top:148px;font-size:4.9px;color:#3a3a3a;transform:scaleX(0.880);">製品A</div>
<div class="t" style="left:150.60px;top:148px;font-size:5.9px;color:#646464;transform:scaleX(0.800);">100</div>
<div class="t" style="left:174.30px;top:148px;font-size:5.9px;color:#646464;transform:scaleX(0.800);">100</div>
<div class="t" style="left:197.10px;top:148px;font-size:5.9px;color:#646464;transform:scaleX(0.800);">200</div>
<div class="t" style="left:220.00px;top:148px;font-size:5.9px;color:#646464;transform:scaleX(0.800);">300</div>
<div class="t" style="left:242.10px;top:148px;font-size:5.9px;color:#646464;transform:scaleX(0.800);">400</div>
<div class="t" style="left:264.90px;top:148px;font-size:5.9px;color:#646464;transform:scaleX(0.800);">500</div>
<div class="a" style="left:127.6px;top:153.70px;width:145.7px;height:8.125px;background:#fff"></div>
<div class="a" style="left:105.7px;top:153.70px;width:21.9px;height:8.125px;background:#fdf0cf"></div>
<div class="t" style="left:106.78px;top:156px;font-size:4.9px;color:#3a3a3a;transform:scaleX(0.880);">製品B</div>
<div class="t" style="left:150.60px;top:156px;font-size:5.9px;color:#646464;transform:scaleX(0.800);">200</div>
<div class="t" style="left:174.30px;top:156px;font-size:5.9px;color:#646464;transform:scaleX(0.800);">200</div>
<div class="t" style="left:197.10px;top:156px;font-size:5.9px;color:#646464;transform:scaleX(0.800);">400</div>
<div class="t" style="left:220.00px;top:156px;font-size:5.9px;color:#646464;transform:scaleX(0.800);">600</div>
<div class="t" style="left:242.10px;top:156px;font-size:5.9px;color:#646464;transform:scaleX(0.800);">800</div>
<div class="t" style="left:262.30px;top:156px;font-size:5.9px;color:#646464;transform:scaleX(0.800);">1000</div>
<div class="a" style="left:127.6px;top:161.82px;width:145.7px;height:8.125px;background:#dce9f7"></div>
<div class="a" style="left:105.7px;top:161.82px;width:21.9px;height:8.125px;background:#fdf0cf"></div>
<div class="t" style="left:106.78px;top:164px;font-size:4.9px;color:#3a3a3a;transform:scaleX(0.880);">製品C</div>
<div class="t" style="left:150.60px;top:164px;font-size:5.9px;color:#646464;transform:scaleX(0.800);">300</div>
<div class="t" style="left:174.30px;top:164px;font-size:5.9px;color:#646464;transform:scaleX(0.800);">300</div>
<div class="t" style="left:197.10px;top:164px;font-size:5.9px;color:#646464;transform:scaleX(0.800);">600</div>
<div class="t" style="left:220.00px;top:164px;font-size:5.9px;color:#646464;transform:scaleX(0.800);">900</div>
<div class="t" style="left:239.50px;top:164px;font-size:5.9px;color:#646464;transform:scaleX(0.800);">1200</div>
<div class="t" style="left:262.30px;top:164px;font-size:5.9px;color:#646464;transform:scaleX(0.800);">1500</div>
<div class="a" style="left:127.6px;top:169.95px;width:145.7px;height:8.125px;background:#fff"></div>
<div class="a" style="left:105.7px;top:169.95px;width:21.9px;height:8.125px;background:#fdf0cf"></div>
<div class="t" style="left:106.78px;top:173px;font-size:4.9px;color:#3a3a3a;transform:scaleX(0.880);">製品D</div>
<div class="t" style="left:150.60px;top:172px;font-size:5.9px;color:#646464;transform:scaleX(0.800);">400</div>
<div class="t" style="left:174.30px;top:172px;font-size:5.9px;color:#646464;transform:scaleX(0.800);">400</div>
<div class="t" style="left:197.10px;top:172px;font-size:5.9px;color:#646464;transform:scaleX(0.800);">800</div>
<div class="t" style="left:217.40px;top:172px;font-size:5.9px;color:#646464;transform:scaleX(0.800);">1200</div>
<div class="t" style="left:239.50px;top:172px;font-size:5.9px;color:#646464;transform:scaleX(0.800);">1600</div>
<div class="t" style="left:262.30px;top:172px;font-size:5.9px;color:#646464;transform:scaleX(0.800);">2000</div>
<div class="a" style="left:127.6px;top:178.07px;width:145.7px;height:8.125px;background:#dce9f7"></div>
<div class="a" style="left:105.7px;top:178.07px;width:21.9px;height:8.125px;background:#fdf0cf"></div>
<div class="t" style="left:106.78px;top:181px;font-size:4.9px;color:#3a3a3a;transform:scaleX(0.880);">製品E</div>
<div class="t" style="left:150.60px;top:180px;font-size:5.9px;color:#646464;transform:scaleX(0.800);">500</div>
<div class="t" style="left:174.30px;top:180px;font-size:5.9px;color:#646464;transform:scaleX(0.800);">500</div>
<div class="t" style="left:194.50px;top:180px;font-size:5.9px;color:#646464;transform:scaleX(0.800);">1000</div>
<div class="t" style="left:217.40px;top:180px;font-size:5.9px;color:#646464;transform:scaleX(0.800);">1500</div>
<div class="t" style="left:239.50px;top:180px;font-size:5.9px;color:#646464;transform:scaleX(0.800);">2000</div>
<div class="t" style="left:262.30px;top:180px;font-size:5.9px;color:#646464;transform:scaleX(0.800);">2500</div>
<div class="a" style="left:127.6px;top:186.20px;width:145.7px;height:8.125px;background:#fff"></div>
<div class="a" style="left:105.7px;top:186.20px;width:21.9px;height:8.125px;background:#fdf0cf"></div>
<div class="t" style="left:106.78px;top:189px;font-size:4.9px;color:#3a3a3a;transform:scaleX(0.880);">製品F</div>
<div class="t" style="left:150.60px;top:188px;font-size:5.9px;color:#646464;transform:scaleX(0.800);">600</div>
<div class="t" style="left:174.30px;top:188px;font-size:5.9px;color:#646464;transform:scaleX(0.800);">600</div>
<div class="t" style="left:194.50px;top:188px;font-size:5.9px;color:#646464;transform:scaleX(0.800);">1200</div>
<div class="t" style="left:217.40px;top:188px;font-size:5.9px;color:#646464;transform:scaleX(0.800);">1800</div>
<div class="t" style="left:239.50px;top:188px;font-size:5.9px;color:#646464;transform:scaleX(0.800);">2400</div>
<div class="t" style="left:262.30px;top:188px;font-size:5.9px;color:#646464;transform:scaleX(0.800);">3000</div>
<div class="a" style="left:127.6px;top:194.32px;width:145.7px;height:8.125px;background:#dce9f7"></div>
<div class="a" style="left:105.7px;top:194.32px;width:21.9px;height:8.125px;background:#fdf0cf"></div>
<div class="t" style="left:106.78px;top:197px;font-size:4.9px;color:#3a3a3a;transform:scaleX(0.880);">製品G</div>
<div class="t" style="left:150.60px;top:196px;font-size:5.9px;color:#646464;transform:scaleX(0.800);">700</div>
<div class="t" style="left:174.30px;top:196px;font-size:5.9px;color:#646464;transform:scaleX(0.800);">700</div>
<div class="t" style="left:194.50px;top:196px;font-size:5.9px;color:#646464;transform:scaleX(0.800);">1400</div>
<div class="t" style="left:217.40px;top:196px;font-size:5.9px;color:#646464;transform:scaleX(0.800);">2100</div>
<div class="t" style="left:239.50px;top:196px;font-size:5.9px;color:#646464;transform:scaleX(0.800);">2800</div>
<div class="t" style="left:262.30px;top:196px;font-size:5.9px;color:#646464;transform:scaleX(0.800);">3500</div>
<div class="a" style="left:127.6px;top:202.45px;width:145.7px;height:8.125px;background:#fff"></div>
<div class="a" style="left:105.7px;top:202.45px;width:21.9px;height:8.125px;background:#fdf0cf"></div>
<div class="t" style="left:106.78px;top:205px;font-size:4.9px;color:#3a3a3a;transform:scaleX(0.880);">製品H</div>
<div class="t" style="left:150.60px;top:205px;font-size:5.9px;color:#646464;transform:scaleX(0.800);">800</div>
<div class="t" style="left:174.30px;top:205px;font-size:5.9px;color:#646464;transform:scaleX(0.800);">800</div>
<div class="t" style="left:194.50px;top:205px;font-size:5.9px;color:#646464;transform:scaleX(0.800);">1600</div>
<div class="t" style="left:217.40px;top:205px;font-size:5.9px;color:#646464;transform:scaleX(0.800);">2400</div>
<div class="t" style="left:239.50px;top:205px;font-size:5.9px;color:#646464;transform:scaleX(0.800);">3200</div>
<div class="t" style="left:262.30px;top:205px;font-size:5.9px;color:#646464;transform:scaleX(0.800);">4000</div>
<div class="a" style="left:127.6px;top:210.57px;width:145.7px;height:8.125px;background:#dce9f7"></div>
<div class="a" style="left:105.7px;top:210.57px;width:21.9px;height:8.125px;background:#fdf0cf"></div>
<div class="t" style="left:106.78px;top:213px;font-size:4.9px;color:#3a3a3a;transform:scaleX(0.880);">製品&nbsp;I</div>
<div class="t" style="left:150.60px;top:213px;font-size:5.9px;color:#646464;transform:scaleX(0.800);">900</div>
<div class="t" style="left:174.30px;top:213px;font-size:5.9px;color:#646464;transform:scaleX(0.800);">900</div>
<div class="t" style="left:194.50px;top:213px;font-size:5.9px;color:#646464;transform:scaleX(0.800);">1800</div>
<div class="t" style="left:217.40px;top:213px;font-size:5.9px;color:#646464;transform:scaleX(0.800);">2700</div>
<div class="t" style="left:239.50px;top:213px;font-size:5.9px;color:#646464;transform:scaleX(0.800);">3600</div>
<div class="t" style="left:262.30px;top:213px;font-size:5.9px;color:#646464;transform:scaleX(0.800);">4500</div>
<div class="a" style="left:127.6px;top:218.70px;width:145.7px;height:8.125px;background:#fff"></div>
<div class="a" style="left:105.7px;top:218.70px;width:21.9px;height:8.125px;background:#fdf0cf"></div>
<div class="t" style="left:106.78px;top:221px;font-size:4.9px;color:#3a3a3a;transform:scaleX(0.880);">製品&nbsp;J</div>
<div class="t" style="left:148.00px;top:221px;font-size:5.9px;color:#646464;transform:scaleX(0.800);">1000</div>
<div class="t" style="left:171.70px;top:221px;font-size:5.9px;color:#646464;transform:scaleX(0.800);">1000</div>
<div class="t" style="left:194.50px;top:221px;font-size:5.9px;color:#646464;transform:scaleX(0.800);">2000</div>
<div class="t" style="left:217.40px;top:221px;font-size:5.9px;color:#646464;transform:scaleX(0.800);">3000</div>
<div class="t" style="left:239.50px;top:221px;font-size:5.9px;color:#646464;transform:scaleX(0.800);">4000</div>
<div class="t" style="left:262.30px;top:221px;font-size:5.9px;color:#646464;transform:scaleX(0.800);">5000</div>
<div class="a" style="left:127.6px;top:226.82px;width:145.7px;height:8.125px;background:#dce9f7"></div>
<div class="a" style="left:105.7px;top:226.82px;width:21.9px;height:8.125px;background:#fdf0cf"></div>
<div class="t" style="left:106.78px;top:229px;font-size:4.9px;color:#3a3a3a;transform:scaleX(0.880);">製品K</div>
<div class="t" style="left:148.40px;top:229px;font-size:5.9px;color:#646464;transform:scaleX(0.800);">1100</div>
<div class="t" style="left:172.10px;top:229px;font-size:5.9px;color:#646464;transform:scaleX(0.800);">1100</div>
<div class="t" style="left:194.50px;top:229px;font-size:5.9px;color:#646464;transform:scaleX(0.800);">2200</div>
<div class="t" style="left:217.40px;top:229px;font-size:5.9px;color:#646464;transform:scaleX(0.800);">3300</div>
<div class="t" style="left:239.50px;top:229px;font-size:5.9px;color:#646464;transform:scaleX(0.800);">4400</div>
<div class="t" style="left:262.30px;top:229px;font-size:5.9px;color:#646464;transform:scaleX(0.800);">5500</div>
<div class="a" style="left:127.6px;top:234.95px;width:145.7px;height:8.125px;background:#fff"></div>
<div class="a" style="left:105.7px;top:234.95px;width:21.9px;height:8.125px;background:#fdf0cf"></div>
<div class="t" style="left:106.78px;top:238px;font-size:4.9px;color:#3a3a3a;transform:scaleX(0.880);">製品L</div>
<div class="t" style="left:148.00px;top:237px;font-size:5.9px;color:#646464;transform:scaleX(0.800);">1200</div>
<div class="t" style="left:171.70px;top:237px;font-size:5.9px;color:#646464;transform:scaleX(0.800);">1200</div>
<div class="t" style="left:194.50px;top:237px;font-size:5.9px;color:#646464;transform:scaleX(0.800);">2400</div>
<div class="t" style="left:217.40px;top:237px;font-size:5.9px;color:#646464;transform:scaleX(0.800);">3600</div>
<div class="t" style="left:239.50px;top:237px;font-size:5.9px;color:#646464;transform:scaleX(0.800);">4800</div>
<div class="t" style="left:262.30px;top:237px;font-size:5.9px;color:#646464;transform:scaleX(0.800);">6000</div>
<div class="a" style="left:127.6px;top:243.07px;width:145.7px;height:8.125px;background:#dce9f7"></div>
<div class="a" style="left:105.7px;top:243.07px;width:21.9px;height:8.125px;background:#fdf0cf"></div>
<div class="t" style="left:106.78px;top:246px;font-size:4.9px;color:#3a3a3a;transform:scaleX(0.880);">製品M</div>
<div class="t" style="left:148.00px;top:245px;font-size:5.9px;color:#646464;transform:scaleX(0.800);">1400</div>
<div class="t" style="left:171.70px;top:245px;font-size:5.9px;color:#646464;transform:scaleX(0.800);">1400</div>
<div class="t" style="left:194.50px;top:245px;font-size:5.9px;color:#646464;transform:scaleX(0.800);">2800</div>
<div class="t" style="left:217.40px;top:245px;font-size:5.9px;color:#646464;transform:scaleX(0.800);">4200</div>
<div class="t" style="left:239.50px;top:245px;font-size:5.9px;color:#646464;transform:scaleX(0.800);">5600</div>
<div class="t" style="left:262.30px;top:245px;font-size:5.9px;color:#646464;transform:scaleX(0.800);">7000</div>
<div class="a" style="left:127.6px;top:251.20px;width:145.7px;height:8.125px;background:#fff"></div>
<div class="a" style="left:105.7px;top:251.20px;width:21.9px;height:8.125px;background:#fdf0cf"></div>
<div class="t" style="left:106.78px;top:254px;font-size:4.9px;color:#3a3a3a;transform:scaleX(0.880);">製品N</div>
<div class="t" style="left:148.00px;top:253px;font-size:5.9px;color:#646464;transform:scaleX(0.800);">1500</div>
<div class="t" style="left:171.70px;top:253px;font-size:5.9px;color:#646464;transform:scaleX(0.800);">1500</div>
<div class="t" style="left:194.50px;top:253px;font-size:5.9px;color:#646464;transform:scaleX(0.800);">3000</div>
<div class="t" style="left:217.40px;top:253px;font-size:5.9px;color:#646464;transform:scaleX(0.800);">4500</div>
<div class="t" style="left:239.50px;top:253px;font-size:5.9px;color:#646464;transform:scaleX(0.800);">6000</div>
<div class="t" style="left:262.30px;top:253px;font-size:5.9px;color:#646464;transform:scaleX(0.800);">7500</div>
<div class="a" style="left:127.6px;top:259.32px;width:145.7px;height:8.125px;background:#dce9f7"></div>
<div class="a" style="left:105.7px;top:259.32px;width:21.9px;height:8.125px;background:#fdf0cf"></div>
<div class="t" style="left:106.78px;top:262px;font-size:4.9px;color:#3a3a3a;transform:scaleX(0.880);">製品O</div>
<div class="t" style="left:148.00px;top:261px;font-size:5.9px;color:#646464;transform:scaleX(0.800);">1600</div>
<div class="t" style="left:171.70px;top:261px;font-size:5.9px;color:#646464;transform:scaleX(0.800);">1600</div>
<div class="t" style="left:194.50px;top:261px;font-size:5.9px;color:#646464;transform:scaleX(0.800);">3200</div>
<div class="t" style="left:217.40px;top:261px;font-size:5.9px;color:#646464;transform:scaleX(0.800);">4800</div>
<div class="t" style="left:239.50px;top:261px;font-size:5.9px;color:#646464;transform:scaleX(0.800);">6400</div>
<div class="t" style="left:262.30px;top:261px;font-size:5.9px;color:#646464;transform:scaleX(0.800);">8000</div>
<div class="a" style="left:127.6px;top:267.45px;width:145.7px;height:8.125px;background:#fff"></div>
<div class="a" style="left:105.7px;top:267.45px;width:21.9px;height:8.125px;background:#fdf0cf"></div>
<div class="t" style="left:106.78px;top:270px;font-size:4.9px;color:#3a3a3a;transform:scaleX(0.880);">製品P</div>
<div class="t" style="left:148.00px;top:270px;font-size:5.9px;color:#646464;transform:scaleX(0.800);">1700</div>
<div class="t" style="left:171.70px;top:270px;font-size:5.9px;color:#646464;transform:scaleX(0.800);">1700</div>
<div class="t" style="left:194.50px;top:270px;font-size:5.9px;color:#646464;transform:scaleX(0.800);">3400</div>
<div class="t" style="left:217.40px;top:270px;font-size:5.9px;color:#646464;transform:scaleX(0.800);">5100</div>
<div class="t" style="left:239.50px;top:270px;font-size:5.9px;color:#646464;transform:scaleX(0.800);">6800</div>
<div class="t" style="left:262.30px;top:270px;font-size:5.9px;color:#646464;transform:scaleX(0.800);">8500</div>
<div class="a" style="left:127.6px;top:275.57px;width:145.7px;height:8.125px;background:#dce9f7"></div>
<div class="a" style="left:105.7px;top:275.57px;width:21.9px;height:8.125px;background:#fdf0cf"></div>
<div class="t" style="left:106.78px;top:278px;font-size:4.9px;color:#3a3a3a;transform:scaleX(0.880);">製品Q</div>
<div class="t" style="left:148.00px;top:278px;font-size:5.9px;color:#646464;transform:scaleX(0.800);">1800</div>
<div class="t" style="left:171.70px;top:278px;font-size:5.9px;color:#646464;transform:scaleX(0.800);">1800</div>
<div class="t" style="left:194.50px;top:278px;font-size:5.9px;color:#646464;transform:scaleX(0.800);">3600</div>
<div class="t" style="left:217.40px;top:278px;font-size:5.9px;color:#646464;transform:scaleX(0.800);">5400</div>
<div class="t" style="left:239.50px;top:278px;font-size:5.9px;color:#646464;transform:scaleX(0.800);">7200</div>
<div class="t" style="left:262.30px;top:278px;font-size:5.9px;color:#646464;transform:scaleX(0.800);">9000</div>
<div class="a" style="left:127.6px;top:283.70px;width:145.7px;height:8.125px;background:#fff"></div>
<div class="a" style="left:105.7px;top:283.70px;width:21.9px;height:8.125px;background:#fdf0cf"></div>
<div class="t" style="left:106.78px;top:286px;font-size:4.9px;color:#3a3a3a;transform:scaleX(0.880);">製品R</div>
<div class="t" style="left:148.00px;top:286px;font-size:5.9px;color:#646464;transform:scaleX(0.800);">1900</div>
<div class="t" style="left:171.70px;top:286px;font-size:5.9px;color:#646464;transform:scaleX(0.800);">1900</div>
<div class="t" style="left:194.50px;top:286px;font-size:5.9px;color:#646464;transform:scaleX(0.800);">3800</div>
<div class="t" style="left:217.40px;top:286px;font-size:5.9px;color:#646464;transform:scaleX(0.800);">5700</div>
<div class="t" style="left:239.50px;top:286px;font-size:5.9px;color:#646464;transform:scaleX(0.800);">7600</div>
<div class="t" style="left:262.30px;top:286px;font-size:5.9px;color:#646464;transform:scaleX(0.800);">9500</div>
<div class="a" style="left:127.6px;top:291.82px;width:145.7px;height:8.125px;background:#dce9f7"></div>
<div class="a" style="left:105.7px;top:291.82px;width:21.9px;height:8.125px;background:#fdf0cf"></div>
<div class="t" style="left:106.78px;top:294px;font-size:4.9px;color:#3a3a3a;transform:scaleX(0.880);">製品S</div>
<div class="t" style="left:148.00px;top:294px;font-size:5.9px;color:#646464;transform:scaleX(0.800);">2000</div>
<div class="t" style="left:171.70px;top:294px;font-size:5.9px;color:#646464;transform:scaleX(0.800);">2000</div>
<div class="t" style="left:194.50px;top:294px;font-size:5.9px;color:#646464;transform:scaleX(0.800);">4000</div>
<div class="t" style="left:217.40px;top:294px;font-size:5.9px;color:#646464;transform:scaleX(0.800);">6000</div>
<div class="t" style="left:239.50px;top:294px;font-size:5.9px;color:#646464;transform:scaleX(0.800);">8000</div>
<div class="t" style="left:259.70px;top:294px;font-size:5.9px;color:#646464;transform:scaleX(0.800);">10000</div>
<div class="a" style="left:127.6px;top:299.95px;width:145.7px;height:8.125px;background:#fff"></div>
<div class="a" style="left:105.7px;top:299.95px;width:21.9px;height:8.125px;background:#fdf0cf"></div>
<div class="t" style="left:106.78px;top:303px;font-size:4.9px;color:#3a3a3a;transform:scaleX(0.880);">製品T</div>
<div class="t" style="left:148.00px;top:302px;font-size:5.9px;color:#646464;transform:scaleX(0.800);">2100</div>
<div class="t" style="left:171.70px;top:302px;font-size:5.9px;color:#646464;transform:scaleX(0.800);">2100</div>
<div class="t" style="left:194.50px;top:302px;font-size:5.9px;color:#646464;transform:scaleX(0.800);">4200</div>
<div class="t" style="left:217.40px;top:302px;font-size:5.9px;color:#646464;transform:scaleX(0.800);">6300</div>
<div class="t" style="left:239.50px;top:302px;font-size:5.9px;color:#646464;transform:scaleX(0.800);">8400</div>
<div class="t" style="left:259.70px;top:302px;font-size:5.9px;color:#646464;transform:scaleX(0.800);">10500</div>
<div class="a" style="left:127.6px;top:308.07px;width:145.7px;height:8.125px;background:#dce9f7"></div>
<div class="a" style="left:105.7px;top:308.07px;width:21.9px;height:8.125px;background:#fdf0cf"></div>
<div class="t" style="left:106.78px;top:311px;font-size:4.9px;color:#3a3a3a;transform:scaleX(0.880);">製品U</div>
<div class="t" style="left:148.00px;top:310px;font-size:5.9px;color:#646464;transform:scaleX(0.800);">2200</div>
<div class="t" style="left:171.70px;top:310px;font-size:5.9px;color:#646464;transform:scaleX(0.800);">2200</div>
<div class="t" style="left:194.50px;top:310px;font-size:5.9px;color:#646464;transform:scaleX(0.800);">4400</div>
<div class="t" style="left:217.40px;top:310px;font-size:5.9px;color:#646464;transform:scaleX(0.800);">6600</div>
<div class="t" style="left:239.50px;top:310px;font-size:5.9px;color:#646464;transform:scaleX(0.800);">8800</div>
<div class="t" style="left:260.10px;top:310px;font-size:5.9px;color:#646464;transform:scaleX(0.800);">11000</div>
<div class="a" style="left:127.6px;top:316.20px;width:145.7px;height:8.125px;background:#fff"></div>
<div class="a" style="left:105.7px;top:316.20px;width:21.9px;height:8.125px;background:#fdf0cf"></div>
<div class="t" style="left:106.78px;top:319px;font-size:4.9px;color:#3a3a3a;transform:scaleX(0.880);">製品V</div>
<div class="t" style="left:148.00px;top:318px;font-size:5.9px;color:#646464;transform:scaleX(0.800);">2300</div>
<div class="t" style="left:171.70px;top:318px;font-size:5.9px;color:#646464;transform:scaleX(0.800);">2300</div>
<div class="t" style="left:194.50px;top:318px;font-size:5.9px;color:#646464;transform:scaleX(0.800);">4600</div>
<div class="t" style="left:217.40px;top:318px;font-size:5.9px;color:#646464;transform:scaleX(0.800);">6900</div>
<div class="t" style="left:239.50px;top:318px;font-size:5.9px;color:#646464;transform:scaleX(0.800);">9200</div>
<div class="t" style="left:260.10px;top:318px;font-size:5.9px;color:#646464;transform:scaleX(0.800);">11500</div>
<div class="a" style="left:127.6px;top:324.32px;width:145.7px;height:8.125px;background:#dce9f7"></div>
<div class="a" style="left:105.7px;top:324.32px;width:21.9px;height:8.125px;background:#fdf0cf"></div>
<div class="t" style="left:106.78px;top:327px;font-size:4.9px;color:#3a3a3a;transform:scaleX(0.880);">製品W</div>
<div class="t" style="left:148.00px;top:326px;font-size:5.9px;color:#646464;transform:scaleX(0.800);">2400</div>
<div class="t" style="left:171.70px;top:326px;font-size:5.9px;color:#646464;transform:scaleX(0.800);">2400</div>
<div class="t" style="left:194.50px;top:326px;font-size:5.9px;color:#646464;transform:scaleX(0.800);">4800</div>
<div class="t" style="left:217.40px;top:326px;font-size:5.9px;color:#646464;transform:scaleX(0.800);">7200</div>
<div class="t" style="left:239.50px;top:326px;font-size:5.9px;color:#646464;transform:scaleX(0.800);">9600</div>
<div class="t" style="left:259.70px;top:326px;font-size:5.9px;color:#646464;transform:scaleX(0.800);">12000</div>
<div class="a" style="left:127.6px;top:332.45px;width:145.7px;height:8.125px;background:#fff"></div>
<div class="a" style="left:105.7px;top:332.45px;width:21.9px;height:8.125px;background:#fdf0cf"></div>
<div class="t" style="left:106.78px;top:335px;font-size:4.9px;color:#3a3a3a;transform:scaleX(0.880);">製品X</div>
<div class="t" style="left:148.00px;top:335px;font-size:5.9px;color:#646464;transform:scaleX(0.800);">2500</div>
<div class="t" style="left:171.70px;top:335px;font-size:5.9px;color:#646464;transform:scaleX(0.800);">2500</div>
<div class="t" style="left:194.50px;top:335px;font-size:5.9px;color:#646464;transform:scaleX(0.800);">5000</div>
<div class="t" style="left:217.40px;top:335px;font-size:5.9px;color:#646464;transform:scaleX(0.800);">7500</div>
<div class="t" style="left:236.90px;top:335px;font-size:5.9px;color:#646464;transform:scaleX(0.800);">10000</div>
<div class="t" style="left:259.70px;top:335px;font-size:5.9px;color:#646464;transform:scaleX(0.800);">12500</div>
<div class="a" style="left:127.6px;top:340.57px;width:145.7px;height:8.125px;background:#dce9f7"></div>
<div class="a" style="left:105.7px;top:340.57px;width:21.9px;height:8.125px;background:#fdf0cf"></div>
<div class="t" style="left:106.78px;top:343px;font-size:4.9px;color:#3a3a3a;transform:scaleX(0.880);">製品Y</div>
<div class="t" style="left:148.00px;top:343px;font-size:5.9px;color:#646464;transform:scaleX(0.800);">2600</div>
<div class="t" style="left:171.70px;top:343px;font-size:5.9px;color:#646464;transform:scaleX(0.800);">2600</div>
<div class="t" style="left:194.50px;top:343px;font-size:5.9px;color:#646464;transform:scaleX(0.800);">5200</div>
<div class="t" style="left:217.40px;top:343px;font-size:5.9px;color:#646464;transform:scaleX(0.800);">7800</div>
<div class="t" style="left:236.90px;top:343px;font-size:5.9px;color:#646464;transform:scaleX(0.800);">10400</div>
<div class="t" style="left:259.70px;top:343px;font-size:5.9px;color:#646464;transform:scaleX(0.800);">13000</div>
<div class="a" style="left:127.6px;top:348.70px;width:145.7px;height:8.125px;background:#fff"></div>
<div class="a" style="left:105.7px;top:348.70px;width:21.9px;height:8.125px;background:#fdf0cf"></div>
<div class="t" style="left:106.78px;top:351px;font-size:4.9px;color:#3a3a3a;transform:scaleX(0.880);">製品Z</div>
<div class="t" style="left:148.00px;top:351px;font-size:5.9px;color:#646464;transform:scaleX(0.800);">2700</div>
<div class="t" style="left:171.70px;top:351px;font-size:5.9px;color:#646464;transform:scaleX(0.800);">2700</div>
<div class="t" style="left:194.50px;top:351px;font-size:5.9px;color:#646464;transform:scaleX(0.800);">5400</div>
<div class="t" style="left:217.40px;top:351px;font-size:5.9px;color:#646464;transform:scaleX(0.800);">8100</div>
<div class="t" style="left:236.90px;top:351px;font-size:5.9px;color:#646464;transform:scaleX(0.800);">10800</div>
<div class="t" style="left:259.70px;top:351px;font-size:5.9px;color:#646464;transform:scaleX(0.800);">13500</div>
<div class="a" style="left:127.6px;top:356.82px;width:145.7px;height:8.125px;background:#dce9f7"></div>
<div class="a" style="left:105.7px;top:356.82px;width:21.9px;height:8.125px;background:#fdf0cf"></div>
<div class="t" style="left:106.78px;top:359px;font-size:4.9px;color:#3a3a3a;transform:scaleX(0.880);">製品A</div>
<div class="t" style="left:150.60px;top:359px;font-size:5.9px;color:#646464;transform:scaleX(0.800);">100</div>
<div class="t" style="left:174.30px;top:359px;font-size:5.9px;color:#646464;transform:scaleX(0.800);">100</div>
<div class="t" style="left:197.10px;top:359px;font-size:5.9px;color:#646464;transform:scaleX(0.800);">200</div>
<div class="t" style="left:220.00px;top:359px;font-size:5.9px;color:#646464;transform:scaleX(0.800);">300</div>
<div class="t" style="left:242.10px;top:359px;font-size:5.9px;color:#646464;transform:scaleX(0.800);">400</div>
<div class="t" style="left:264.90px;top:359px;font-size:5.9px;color:#646464;transform:scaleX(0.800);">500</div>
<div class="a" style="left:127.6px;top:364.95px;width:145.7px;height:8.125px;background:#fff"></div>
<div class="a" style="left:105.7px;top:364.95px;width:21.9px;height:8.125px;background:#fdf0cf"></div>
<div class="t" style="left:106.78px;top:368px;font-size:4.9px;color:#3a3a3a;transform:scaleX(0.880);">製品B</div>
<div class="t" style="left:150.60px;top:367px;font-size:5.9px;color:#646464;transform:scaleX(0.800);">200</div>
<div class="t" style="left:174.30px;top:367px;font-size:5.9px;color:#646464;transform:scaleX(0.800);">200</div>
<div class="t" style="left:197.10px;top:367px;font-size:5.9px;color:#646464;transform:scaleX(0.800);">400</div>
<div class="t" style="left:220.00px;top:367px;font-size:5.9px;color:#646464;transform:scaleX(0.800);">600</div>
<div class="t" style="left:242.10px;top:367px;font-size:5.9px;color:#646464;transform:scaleX(0.800);">800</div>
<div class="t" style="left:262.30px;top:367px;font-size:5.9px;color:#646464;transform:scaleX(0.800);">1000</div>
<div class="a" style="left:127.6px;top:373.07px;width:145.7px;height:8.125px;background:#dce9f7"></div>
<div class="a" style="left:105.7px;top:373.07px;width:21.9px;height:8.125px;background:#fdf0cf"></div>
<div class="t" style="left:106.78px;top:376px;font-size:4.9px;color:#3a3a3a;transform:scaleX(0.880);">製品C</div>
<div class="t" style="left:150.60px;top:375px;font-size:5.9px;color:#646464;transform:scaleX(0.800);">300</div>
<div class="t" style="left:174.30px;top:375px;font-size:5.9px;color:#646464;transform:scaleX(0.800);">300</div>
<div class="t" style="left:197.10px;top:375px;font-size:5.9px;color:#646464;transform:scaleX(0.800);">600</div>
<div class="t" style="left:220.00px;top:375px;font-size:5.9px;color:#646464;transform:scaleX(0.800);">900</div>
<div class="t" style="left:239.50px;top:375px;font-size:5.9px;color:#646464;transform:scaleX(0.800);">1200</div>
<div class="t" style="left:262.30px;top:375px;font-size:5.9px;color:#646464;transform:scaleX(0.800);">1500</div>
<div class="a" style="left:127.6px;top:381.20px;width:145.7px;height:8.125px;background:#fff"></div>
<div class="a" style="left:105.7px;top:381.20px;width:21.9px;height:8.125px;background:#fdf0cf"></div>
<div class="t" style="left:106.78px;top:384px;font-size:4.9px;color:#3a3a3a;transform:scaleX(0.880);">製品D</div>
<div class="t" style="left:150.60px;top:383px;font-size:5.9px;color:#646464;transform:scaleX(0.800);">400</div>
<div class="t" style="left:174.30px;top:383px;font-size:5.9px;color:#646464;transform:scaleX(0.800);">400</div>
<div class="t" style="left:197.10px;top:383px;font-size:5.9px;color:#646464;transform:scaleX(0.800);">800</div>
<div class="t" style="left:217.40px;top:383px;font-size:5.9px;color:#646464;transform:scaleX(0.800);">1200</div>
<div class="t" style="left:239.50px;top:383px;font-size:5.9px;color:#646464;transform:scaleX(0.800);">1600</div>
<div class="t" style="left:262.30px;top:383px;font-size:5.9px;color:#646464;transform:scaleX(0.800);">2000</div>
<div class="a" style="left:127.6px;top:389.32px;width:145.7px;height:8.125px;background:#dce9f7"></div>
<div class="a" style="left:105.7px;top:389.32px;width:21.9px;height:8.125px;background:#fdf0cf"></div>
<div class="t" style="left:106.78px;top:392px;font-size:4.9px;color:#3a3a3a;transform:scaleX(0.880);">製品E</div>
<div class="t" style="left:150.60px;top:391px;font-size:5.9px;color:#646464;transform:scaleX(0.800);">500</div>
<div class="t" style="left:174.30px;top:391px;font-size:5.9px;color:#646464;transform:scaleX(0.800);">500</div>
<div class="t" style="left:194.50px;top:391px;font-size:5.9px;color:#646464;transform:scaleX(0.800);">1000</div>
<div class="t" style="left:217.40px;top:391px;font-size:5.9px;color:#646464;transform:scaleX(0.800);">1500</div>
<div class="t" style="left:239.50px;top:391px;font-size:5.9px;color:#646464;transform:scaleX(0.800);">2000</div>
<div class="t" style="left:262.30px;top:391px;font-size:5.9px;color:#646464;transform:scaleX(0.800);">2500</div>
<div class="a" style="left:127.6px;top:397.45px;width:145.7px;height:8.125px;background:#fff"></div>
<div class="a" style="left:105.7px;top:397.45px;width:21.9px;height:8.125px;background:#fdf0cf"></div>
<div class="t" style="left:106.78px;top:400px;font-size:4.9px;color:#3a3a3a;transform:scaleX(0.880);">製品F</div>
<div class="t" style="left:150.60px;top:400px;font-size:5.9px;color:#646464;transform:scaleX(0.800);">600</div>
<div class="t" style="left:174.30px;top:400px;font-size:5.9px;color:#646464;transform:scaleX(0.800);">600</div>
<div class="t" style="left:194.50px;top:400px;font-size:5.9px;color:#646464;transform:scaleX(0.800);">1200</div>
<div class="t" style="left:217.40px;top:400px;font-size:5.9px;color:#646464;transform:scaleX(0.800);">1800</div>
<div class="t" style="left:239.50px;top:400px;font-size:5.9px;color:#646464;transform:scaleX(0.800);">2400</div>
<div class="t" style="left:262.30px;top:400px;font-size:5.9px;color:#646464;transform:scaleX(0.800);">3000</div>
<div class="a" style="left:127.6px;top:405.57px;width:145.7px;height:8.125px;background:#dce9f7"></div>
<div class="a" style="left:105.7px;top:405.57px;width:21.9px;height:8.125px;background:#fdf0cf"></div>
<div class="t" style="left:106.78px;top:408px;font-size:4.9px;color:#3a3a3a;transform:scaleX(0.880);">製品G</div>
<div class="t" style="left:150.60px;top:408px;font-size:5.9px;color:#646464;transform:scaleX(0.800);">700</div>
<div class="t" style="left:174.30px;top:408px;font-size:5.9px;color:#646464;transform:scaleX(0.800);">700</div>
<div class="t" style="left:194.50px;top:408px;font-size:5.9px;color:#646464;transform:scaleX(0.800);">1400</div>
<div class="t" style="left:217.40px;top:408px;font-size:5.9px;color:#646464;transform:scaleX(0.800);">2100</div>
<div class="t" style="left:239.50px;top:408px;font-size:5.9px;color:#646464;transform:scaleX(0.800);">2800</div>
<div class="t" style="left:262.30px;top:408px;font-size:5.9px;color:#646464;transform:scaleX(0.800);">3500</div>
<div class="a" style="left:127.6px;top:413.70px;width:145.7px;height:8.125px;background:#fff"></div>
<div class="a" style="left:105.7px;top:413.70px;width:21.9px;height:8.125px;background:#fdf0cf"></div>
<div class="t" style="left:106.78px;top:416px;font-size:4.9px;color:#3a3a3a;transform:scaleX(0.880);">製品H</div>
<div class="t" style="left:150.60px;top:416px;font-size:5.9px;color:#646464;transform:scaleX(0.800);">800</div>
<div class="t" style="left:174.30px;top:416px;font-size:5.9px;color:#646464;transform:scaleX(0.800);">800</div>
<div class="t" style="left:194.50px;top:416px;font-size:5.9px;color:#646464;transform:scaleX(0.800);">1600</div>
<div class="t" style="left:217.40px;top:416px;font-size:5.9px;color:#646464;transform:scaleX(0.800);">2400</div>
<div class="t" style="left:239.50px;top:416px;font-size:5.9px;color:#646464;transform:scaleX(0.800);">3200</div>
<div class="t" style="left:262.30px;top:416px;font-size:5.9px;color:#646464;transform:scaleX(0.800);">4000</div>
<div class="a" style="left:127.6px;top:421.82px;width:145.7px;height:8.125px;background:#dce9f7"></div>
<div class="a" style="left:105.7px;top:421.82px;width:21.9px;height:8.125px;background:#fdf0cf"></div>
<div class="t" style="left:106.78px;top:424px;font-size:4.9px;color:#3a3a3a;transform:scaleX(0.880);">製品&nbsp;I</div>
<div class="t" style="left:150.60px;top:424px;font-size:5.9px;color:#646464;transform:scaleX(0.800);">900</div>
<div class="t" style="left:174.30px;top:424px;font-size:5.9px;color:#646464;transform:scaleX(0.800);">900</div>
<div class="t" style="left:194.50px;top:424px;font-size:5.9px;color:#646464;transform:scaleX(0.800);">1800</div>
<div class="t" style="left:217.40px;top:424px;font-size:5.9px;color:#646464;transform:scaleX(0.800);">2700</div>
<div class="t" style="left:239.50px;top:424px;font-size:5.9px;color:#646464;transform:scaleX(0.800);">3600</div>
<div class="t" style="left:262.30px;top:424px;font-size:5.9px;color:#646464;transform:scaleX(0.800);">4500</div>
<div class="a" style="left:127.6px;top:429.95px;width:145.7px;height:8.125px;background:#fff"></div>
<div class="a" style="left:105.7px;top:429.95px;width:21.9px;height:8.125px;background:#fdf0cf"></div>
<div class="t" style="left:106.78px;top:433px;font-size:4.9px;color:#3a3a3a;transform:scaleX(0.880);">製品&nbsp;J</div>
<div class="t" style="left:148.00px;top:432px;font-size:5.9px;color:#646464;transform:scaleX(0.800);">1000</div>
<div class="t" style="left:171.70px;top:432px;font-size:5.9px;color:#646464;transform:scaleX(0.800);">1000</div>
<div class="t" style="left:194.50px;top:432px;font-size:5.9px;color:#646464;transform:scaleX(0.800);">2000</div>
<div class="t" style="left:217.40px;top:432px;font-size:5.9px;color:#646464;transform:scaleX(0.800);">3000</div>
<div class="t" style="left:239.50px;top:432px;font-size:5.9px;color:#646464;transform:scaleX(0.800);">4000</div>
<div class="t" style="left:262.30px;top:432px;font-size:5.9px;color:#646464;transform:scaleX(0.800);">5000</div>
<div class="a" style="left:127.6px;top:438.07px;width:145.7px;height:8.125px;background:#dce9f7"></div>
<div class="a" style="left:105.7px;top:438.07px;width:21.9px;height:8.125px;background:#fdf0cf"></div>
<div class="t" style="left:106.78px;top:441px;font-size:4.9px;color:#3a3a3a;transform:scaleX(0.880);">製品K</div>
<div class="t" style="left:148.40px;top:440px;font-size:5.9px;color:#646464;transform:scaleX(0.800);">1100</div>
<div class="t" style="left:172.10px;top:440px;font-size:5.9px;color:#646464;transform:scaleX(0.800);">1100</div>
<div class="t" style="left:194.50px;top:440px;font-size:5.9px;color:#646464;transform:scaleX(0.800);">2200</div>
<div class="t" style="left:217.40px;top:440px;font-size:5.9px;color:#646464;transform:scaleX(0.800);">3300</div>
<div class="t" style="left:239.50px;top:440px;font-size:5.9px;color:#646464;transform:scaleX(0.800);">4400</div>
<div class="t" style="left:262.30px;top:440px;font-size:5.9px;color:#646464;transform:scaleX(0.800);">5500</div>
<div class="a" style="left:127.6px;top:446.20px;width:145.7px;height:8.125px;background:#fff"></div>
<div class="a" style="left:105.7px;top:446.20px;width:21.9px;height:8.125px;background:#fdf0cf"></div>
<div class="t" style="left:106.78px;top:449px;font-size:4.9px;color:#3a3a3a;transform:scaleX(0.880);">製品L</div>
<div class="t" style="left:148.00px;top:448px;font-size:5.9px;color:#646464;transform:scaleX(0.800);">1200</div>
<div class="t" style="left:171.70px;top:448px;font-size:5.9px;color:#646464;transform:scaleX(0.800);">1200</div>
<div class="t" style="left:194.50px;top:448px;font-size:5.9px;color:#646464;transform:scaleX(0.800);">2400</div>
<div class="t" style="left:217.40px;top:448px;font-size:5.9px;color:#646464;transform:scaleX(0.800);">3600</div>
<div class="t" style="left:239.50px;top:448px;font-size:5.9px;color:#646464;transform:scaleX(0.800);">4800</div>
<div class="t" style="left:262.30px;top:448px;font-size:5.9px;color:#646464;transform:scaleX(0.800);">6000</div>
<div class="a" style="left:127.6px;top:454.32px;width:145.7px;height:8.125px;background:#dce9f7"></div>
<div class="a" style="left:105.7px;top:454.32px;width:21.9px;height:8.125px;background:#fdf0cf"></div>
<div class="t" style="left:106.78px;top:457px;font-size:4.9px;color:#3a3a3a;transform:scaleX(0.880);">製品M</div>
<div class="t" style="left:148.00px;top:456px;font-size:5.9px;color:#646464;transform:scaleX(0.800);">1400</div>
<div class="t" style="left:171.70px;top:456px;font-size:5.9px;color:#646464;transform:scaleX(0.800);">1400</div>
<div class="t" style="left:194.50px;top:456px;font-size:5.9px;color:#646464;transform:scaleX(0.800);">2800</div>
<div class="t" style="left:217.40px;top:456px;font-size:5.9px;color:#646464;transform:scaleX(0.800);">4200</div>
<div class="t" style="left:239.50px;top:456px;font-size:5.9px;color:#646464;transform:scaleX(0.800);">5600</div>
<div class="t" style="left:262.30px;top:456px;font-size:5.9px;color:#646464;transform:scaleX(0.800);">7000</div>
<div class="a" style="left:127.6px;top:462.45px;width:145.7px;height:8.125px;background:#fff"></div>
<div class="a" style="left:105.7px;top:462.45px;width:21.9px;height:8.125px;background:#fdf0cf"></div>
<div class="t" style="left:106.78px;top:465px;font-size:4.9px;color:#3a3a3a;transform:scaleX(0.880);">製品N</div>
<div class="t" style="left:148.00px;top:465px;font-size:5.9px;color:#646464;transform:scaleX(0.800);">1500</div>
<div class="t" style="left:171.70px;top:465px;font-size:5.9px;color:#646464;transform:scaleX(0.800);">1500</div>
<div class="t" style="left:194.50px;top:465px;font-size:5.9px;color:#646464;transform:scaleX(0.800);">3000</div>
<div class="t" style="left:217.40px;top:465px;font-size:5.9px;color:#646464;transform:scaleX(0.800);">4500</div>
<div class="t" style="left:239.50px;top:465px;font-size:5.9px;color:#646464;transform:scaleX(0.800);">6000</div>
<div class="t" style="left:262.30px;top:465px;font-size:5.9px;color:#646464;transform:scaleX(0.800);">7500</div>
<div class="a" style="left:127.6px;top:470.57px;width:145.7px;height:8.125px;background:#dce9f7"></div>
<div class="a" style="left:105.7px;top:470.57px;width:21.9px;height:8.125px;background:#fdf0cf"></div>
<div class="t" style="left:106.78px;top:473px;font-size:4.9px;color:#3a3a3a;transform:scaleX(0.880);">製品O</div>
<div class="t" style="left:148.00px;top:473px;font-size:5.9px;color:#646464;transform:scaleX(0.800);">1600</div>
<div class="t" style="left:171.70px;top:473px;font-size:5.9px;color:#646464;transform:scaleX(0.800);">1600</div>
<div class="t" style="left:194.50px;top:473px;font-size:5.9px;color:#646464;transform:scaleX(0.800);">3200</div>
<div class="t" style="left:217.40px;top:473px;font-size:5.9px;color:#646464;transform:scaleX(0.800);">4800</div>
<div class="t" style="left:239.50px;top:473px;font-size:5.9px;color:#646464;transform:scaleX(0.800);">6400</div>
<div class="t" style="left:262.30px;top:473px;font-size:5.9px;color:#646464;transform:scaleX(0.800);">8000</div>
<div class="a" style="left:127.6px;top:478.70px;width:145.7px;height:8.125px;background:#fff"></div>
<div class="a" style="left:105.7px;top:478.70px;width:21.9px;height:8.125px;background:#fdf0cf"></div>
<div class="t" style="left:106.78px;top:481px;font-size:4.9px;color:#3a3a3a;transform:scaleX(0.880);">製品P</div>
<div class="t" style="left:148.00px;top:481px;font-size:5.9px;color:#646464;transform:scaleX(0.800);">1700</div>
<div class="t" style="left:171.70px;top:481px;font-size:5.9px;color:#646464;transform:scaleX(0.800);">1700</div>
<div class="t" style="left:194.50px;top:481px;font-size:5.9px;color:#646464;transform:scaleX(0.800);">3400</div>
<div class="t" style="left:217.40px;top:481px;font-size:5.9px;color:#646464;transform:scaleX(0.800);">5100</div>
<div class="t" style="left:239.50px;top:481px;font-size:5.9px;color:#646464;transform:scaleX(0.800);">6800</div>
<div class="t" style="left:262.30px;top:481px;font-size:5.9px;color:#646464;transform:scaleX(0.800);">8500</div>
<div class="a" style="left:127.6px;top:486.82px;width:145.7px;height:8.125px;background:#dce9f7"></div>
<div class="a" style="left:105.7px;top:486.82px;width:21.9px;height:8.125px;background:#fdf0cf"></div>
<div class="t" style="left:106.78px;top:489px;font-size:4.9px;color:#3a3a3a;transform:scaleX(0.880);">製品Q</div>
<div class="t" style="left:148.00px;top:489px;font-size:5.9px;color:#646464;transform:scaleX(0.800);">1800</div>
<div class="t" style="left:171.70px;top:489px;font-size:5.9px;color:#646464;transform:scaleX(0.800);">1800</div>
<div class="t" style="left:194.50px;top:489px;font-size:5.9px;color:#646464;transform:scaleX(0.800);">3600</div>
<div class="t" style="left:217.40px;top:489px;font-size:5.9px;color:#646464;transform:scaleX(0.800);">5400</div>
<div class="t" style="left:239.50px;top:489px;font-size:5.9px;color:#646464;transform:scaleX(0.800);">7200</div>
<div class="t" style="left:262.30px;top:489px;font-size:5.9px;color:#646464;transform:scaleX(0.800);">9000</div>
<div class="a" style="left:127.6px;top:494.95px;width:145.7px;height:8.125px;background:#fff"></div>
<div class="a" style="left:105.7px;top:494.95px;width:21.9px;height:8.125px;background:#fdf0cf"></div>
<div class="t" style="left:106.78px;top:498px;font-size:4.9px;color:#3a3a3a;transform:scaleX(0.880);">製品R</div>
<div class="t" style="left:148.00px;top:497px;font-size:5.9px;color:#646464;transform:scaleX(0.800);">1900</div>
<div class="t" style="left:171.70px;top:497px;font-size:5.9px;color:#646464;transform:scaleX(0.800);">1900</div>
<div class="t" style="left:194.50px;top:497px;font-size:5.9px;color:#646464;transform:scaleX(0.800);">3800</div>
<div class="t" style="left:217.40px;top:497px;font-size:5.9px;color:#646464;transform:scaleX(0.800);">5700</div>
<div class="t" style="left:239.50px;top:497px;font-size:5.9px;color:#646464;transform:scaleX(0.800);">7600</div>
<div class="t" style="left:262.30px;top:497px;font-size:5.9px;color:#646464;transform:scaleX(0.800);">9500</div>
<div class="a" style="left:127.6px;top:503.07px;width:145.7px;height:8.125px;background:#dce9f7"></div>
<div class="a" style="left:105.7px;top:503.07px;width:21.9px;height:8.125px;background:#fdf0cf"></div>
<div class="t" style="left:106.78px;top:506px;font-size:4.9px;color:#3a3a3a;transform:scaleX(0.880);">製品S</div>
<div class="t" style="left:148.00px;top:505px;font-size:5.9px;color:#646464;transform:scaleX(0.800);">2000</div>
<div class="t" style="left:171.70px;top:505px;font-size:5.9px;color:#646464;transform:scaleX(0.800);">2000</div>
<div class="t" style="left:194.50px;top:505px;font-size:5.9px;color:#646464;transform:scaleX(0.800);">4000</div>
<div class="t" style="left:217.40px;top:505px;font-size:5.9px;color:#646464;transform:scaleX(0.800);">6000</div>
<div class="t" style="left:239.50px;top:505px;font-size:5.9px;color:#646464;transform:scaleX(0.800);">8000</div>
<div class="t" style="left:259.70px;top:505px;font-size:5.9px;color:#646464;transform:scaleX(0.800);">10000</div>
<div class="a" style="left:105.7px;top:136.95px;width:167.60000000000002px;height:.9px;background:#262626"></div>
<div class="a" style="left:105.7px;top:145.07px;width:167.60000000000002px;height:.9px;background:#262626"></div>
<div class="a" style="left:105.7px;top:153.40px;width:167.60000000000002px;height:.55px;background:#9a9a9a"></div>
<div class="a" style="left:105.7px;top:161.52px;width:167.60000000000002px;height:.55px;background:#9a9a9a"></div>
<div class="a" style="left:105.7px;top:169.65px;width:167.60000000000002px;height:.55px;background:#9a9a9a"></div>
<div class="a" style="left:105.7px;top:177.77px;width:167.60000000000002px;height:.55px;background:#9a9a9a"></div>
<div class="a" style="left:105.7px;top:185.90px;width:167.60000000000002px;height:.55px;background:#9a9a9a"></div>
<div class="a" style="left:105.7px;top:194.02px;width:167.60000000000002px;height:.55px;background:#9a9a9a"></div>
<div class="a" style="left:105.7px;top:202.15px;width:167.60000000000002px;height:.55px;background:#9a9a9a"></div>
<div class="a" style="left:105.7px;top:210.27px;width:167.60000000000002px;height:.55px;background:#9a9a9a"></div>
<div class="a" style="left:105.7px;top:218.40px;width:167.60000000000002px;height:.55px;background:#9a9a9a"></div>
<div class="a" style="left:105.7px;top:226.52px;width:167.60000000000002px;height:.55px;background:#9a9a9a"></div>
<div class="a" style="left:105.7px;top:234.65px;width:167.60000000000002px;height:.55px;background:#9a9a9a"></div>
<div class="a" style="left:105.7px;top:242.77px;width:167.60000000000002px;height:.55px;background:#9a9a9a"></div>
<div class="a" style="left:105.7px;top:250.90px;width:167.60000000000002px;height:.55px;background:#9a9a9a"></div>
<div class="a" style="left:105.7px;top:259.02px;width:167.60000000000002px;height:.55px;background:#9a9a9a"></div>
<div class="a" style="left:105.7px;top:267.15px;width:167.60000000000002px;height:.55px;background:#9a9a9a"></div>
<div class="a" style="left:105.7px;top:275.27px;width:167.60000000000002px;height:.55px;background:#9a9a9a"></div>
<div class="a" style="left:105.7px;top:283.40px;width:167.60000000000002px;height:.55px;background:#9a9a9a"></div>
<div class="a" style="left:105.7px;top:291.52px;width:167.60000000000002px;height:.55px;background:#9a9a9a"></div>
<div class="a" style="left:105.7px;top:299.65px;width:167.60000000000002px;height:.55px;background:#9a9a9a"></div>
<div class="a" style="left:105.7px;top:307.77px;width:167.60000000000002px;height:.55px;background:#9a9a9a"></div>
<div class="a" style="left:105.7px;top:315.90px;width:167.60000000000002px;height:.55px;background:#9a9a9a"></div>
<div class="a" style="left:105.7px;top:324.02px;width:167.60000000000002px;height:.55px;background:#9a9a9a"></div>
<div class="a" style="left:105.7px;top:332.15px;width:167.60000000000002px;height:.55px;background:#9a9a9a"></div>
<div class="a" style="left:105.7px;top:340.27px;width:167.60000000000002px;height:.55px;background:#9a9a9a"></div>
<div class="a" style="left:105.7px;top:348.40px;width:167.60000000000002px;height:.55px;background:#9a9a9a"></div>
<div class="a" style="left:105.7px;top:356.52px;width:167.60000000000002px;height:.55px;background:#9a9a9a"></div>
<div class="a" style="left:105.7px;top:364.65px;width:167.60000000000002px;height:.55px;background:#9a9a9a"></div>
<div class="a" style="left:105.7px;top:372.77px;width:167.60000000000002px;height:.55px;background:#9a9a9a"></div>
<div class="a" style="left:105.7px;top:380.90px;width:167.60000000000002px;height:.55px;background:#9a9a9a"></div>
<div class="a" style="left:105.7px;top:389.02px;width:167.60000000000002px;height:.55px;background:#9a9a9a"></div>
<div class="a" style="left:105.7px;top:397.15px;width:167.60000000000002px;height:.55px;background:#9a9a9a"></div>
<div class="a" style="left:105.7px;top:405.27px;width:167.60000000000002px;height:.55px;background:#9a9a9a"></div>
<div class="a" style="left:105.7px;top:413.40px;width:167.60000000000002px;height:.55px;background:#9a9a9a"></div>
<div class="a" style="left:105.7px;top:421.52px;width:167.60000000000002px;height:.55px;background:#9a9a9a"></div>
<div class="a" style="left:105.7px;top:429.65px;width:167.60000000000002px;height:.55px;background:#9a9a9a"></div>
<div class="a" style="left:105.7px;top:437.77px;width:167.60000000000002px;height:.55px;background:#9a9a9a"></div>
<div class="a" style="left:105.7px;top:445.90px;width:167.60000000000002px;height:.55px;background:#9a9a9a"></div>
<div class="a" style="left:105.7px;top:454.02px;width:167.60000000000002px;height:.55px;background:#9a9a9a"></div>
<div class="a" style="left:105.7px;top:462.15px;width:167.60000000000002px;height:.55px;background:#9a9a9a"></div>
<div class="a" style="left:105.7px;top:470.27px;width:167.60000000000002px;height:.55px;background:#9a9a9a"></div>
<div class="a" style="left:105.7px;top:478.40px;width:167.60000000000002px;height:.55px;background:#9a9a9a"></div>
<div class="a" style="left:105.7px;top:486.52px;width:167.60000000000002px;height:.55px;background:#9a9a9a"></div>
<div class="a" style="left:105.7px;top:494.65px;width:167.60000000000002px;height:.55px;background:#9a9a9a"></div>
<div class="a" style="left:105.7px;top:502.77px;width:167.60000000000002px;height:.55px;background:#9a9a9a"></div>
<div class="a" style="left:127.19999999999999px;top:137.45px;width:.55px;height:380px;background:#6a6a6a"></div>
<div class="a" style="left:158.6px;top:137.45px;width:.55px;height:380px;background:#6a6a6a"></div>
<div class="a" style="left:182.29999999999998px;top:137.45px;width:.55px;height:380px;background:#6a6a6a"></div>
<div class="a" style="left:205.1px;top:137.45px;width:.55px;height:380px;background:#6a6a6a"></div>
<div class="a" style="left:228.0px;top:137.45px;width:.55px;height:380px;background:#6a6a6a"></div>
<div class="a" style="left:250.1px;top:137.45px;width:.55px;height:380px;background:#6a6a6a"></div>
<div class="t" style="left:164.76px;top:271px;font-size:13px;color:rgba(120,120,120,.5);transform:scaleX(1.092);">1ページ</div>
<div class="a" style="left:105.7px;top:437.47px;width:167.60000000000002px;height:0;border-top:1.200px dashed #3a3ab0"></div>
<div class="a" style="left:105.0px;top:120.60000000000001px;width:169.8px;height:395px;border:1px solid #5a5ab4;border-right:2px solid #3a3ab0"></div>
<div class="a" style="left:296.09000000000003px;top:202.05px;width:23.69px;height:8.925px;border:.9px solid #3a7d57;background:#adadad;box-shadow:inset 0 0 0 .7px rgba(255,255,255,.3)"></div>
<div class="a" style="left:318.08px;top:209.27px;width:2.400px;height:2.400px;background:#217346;border:.4px solid #a2a2a2"></div>
<div class="a" style="left:387.800px;top:367.200px;width:14.400px;height:14.400px;border-radius:50%;background:#dc5f54"></div>
<svg class="a" style="left:379.500px;top:362px" width="9.600" height="9.600" viewBox="0 0 9.600 9.600"><path d="M3.600.8h2.400v2.800h2.800v2.400H6v2.800H3.600V6H.8V3.600h2.800z" fill="#fff" stroke="#222" stroke-width=".9"/></svg>
<div class="a" style="left:916px;top:113px;width:12px;height:397px;background:#e6e6e6"></div>
<div class="a" style="left:917.600px;top:113.400px;width:8.800px;height:395.500px;background:#fff"></div>
<svg class="a" style="left:920.200px;top:117.200px" width="3.400" height="2" viewBox="0 0 4 2.400"><path d="M0 2.400h4L2 0z" fill="#666"/></svg>
<div class="a" style="left:917.600px;top:122.500px;width:8.600px;height:1px;background:#e0e0e0"></div>
<div class="a" style="left:96px;top:509.600px;width:832px;height:11px;background:#e6e6e6"></div>
<svg class="a" style="left:105px;top:512.500px" width="16" height="5" viewBox="0 0 16 5" fill="none" stroke="#b8b8b8" stroke-width=".9"><path d="M3.200.5l-2 2 2 2M12.400.5l2 2-2 2"/></svg>
<div class="a" style="left:136px;top:511px;width:1px;height:8px;background:#bdbdbd"></div>
<div class="a" style="left:172.500px;top:509.600px;width:35.500px;height:9.200px;background:#fff;border-bottom:1.200px solid #217346"></div>
<div class="t" style="left:140.45px;top:512px;font-size:8px;color:#444;transform:scaleX(1.004);">Sheet1</div>
<div class="t" style="left:176.75px;top:512px;font-size:8px;color:#217346;transform:scaleX(0.992);">Sheet2</div>
<svg class="a" style="left:221.300px;top:511.400px" width="7.400" height="7.400" viewBox="0 0 7.400 7.400" fill="none" stroke="#777" stroke-width=".7"><circle cx="3.700" cy="3.700" r="3.200"/><path d="M3.700 2v3.400M2 3.700h3.400"/></svg>
<svg class="a" style="left:592.400px;top:511.800px" width="2" height="7" viewBox="0 0 2 7" fill="#999"><circle cx="1" cy="1" r=".6"/><circle cx="1" cy="3.400" r=".6"/><circle cx="1" cy="5.800" r=".6"/></svg>
<div class="a" style="left:600.500px;top:510.600px;width:315px;height:8.800px;background:#ececec"></div>
<div class="a" style="left:610px;top:510.600px;width:288.600px;height:8.800px;background:#e0e0e0;border:1px solid #c8c8c8"></div>
<div class="a" style="left:600.500px;top:510.600px;width:8.500px;height:8.800px;background:#f6f6f6"></div><div class="a" style="left:907.800px;top:510.600px;width:8.200px;height:8.800px;background:#f6f6f6"></div>
<svg class="a" style="left:603.500px;top:513px" width="2.400" height="4" viewBox="0 0 2.400 4"><path d="M2.400 0v4L0 2z" fill="#555"/></svg>
<svg class="a" style="left:910.800px;top:513px" width="2.400" height="4" viewBox="0 0 2.400 4"><path d="M0 0v4l2.400-2z" fill="#555"/></svg>
<svg class="a" style="left:920px;top:502.700px" width="4" height="2.400" viewBox="0 0 4 2.400"><path d="M0 0h4L2 2.400z" fill="#666"/></svg>
<div class="a" style="left:96px;top:520.600px;width:832px;height:12.800px;background:#f3f3f3"></div>
<div class="t" style="left:99.91px;top:524px;font-size:6.8px;color:#444;transform:scaleX(0.969);">準備完了</div>
<svg class="a" style="left:713.500px;top:523.200px" width="8" height="7.600" viewBox="0 0 16 15.200"><rect x="0" y="0" width="13" height="9" fill="#555"/><rect x="4" y="10" width="5" height="2" fill="#555"/><circle cx="11.500" cy="10.500" r="4" fill="#555" stroke="#f3f3f3" stroke-width="1.200"/><circle cx="11.500" cy="10.500" r="1.400" fill="#f3f3f3"/></svg>
<div class="t" style="left:723.41px;top:524px;font-size:6.6px;color:#444;transform:scaleX(0.967);">表示設定</div>
<div class="a" style="left:804.600px;top:520.600px;width:20.300px;height:12.800px;background:#c8c8c8"></div>
<svg class="a" style="left:766.500px;top:523.300px" width="7" height="7" viewBox="0 0 14 14" fill="none" stroke="#8a8a8a" stroke-width="1.200"><rect x=".6" y=".6" width="12.800" height="12.800"/><path d="M.6 5h12.800M.6 9.400h12.800M5 .6v12.800M9.400 .6v12.800"/></svg>
<svg class="a" style="left:788.400px;top:523.300px" width="7" height="7" viewBox="0 0 14 14" fill="none" stroke="#8a8a8a" stroke-width="1.200"><rect x=".6" y=".6" width="12.800" height="12.800"/><rect x="3.600" y="3.600" width="6.800" height="9.800"/></svg>
<svg class="a" style="left:810.600px;top:523.300px" width="7" height="7" viewBox="0 0 14 14" fill="none" stroke="#666" stroke-width="1.200"><rect x=".6" y=".6" width="12.800" height="12.800"/><path d="M4.600.6v5h5v-5M7 5.600v8"/></svg>
<div class="t" style="left:828.800px;top:523px;font-size:7px;color:#666">−</div>
<div class="a" style="left:836px;top:526.800px;width:54px;height:.8px;background:#b4b4b4"></div>
<div class="a" style="left:862.700px;top:525.200px;width:.8px;height:4px;background:#b4b4b4"></div>
<div class="a" style="left:850.600px;top:523.600px;width:2.200px;height:6.800px;background:#555"></div>
<div class="t" style="left:893.300px;top:523px;font-size:7px;color:#666">+</div>
<div class="t" style="left:905.11px;top:524px;font-size:7.2px;color:#555;transform:scaleX(0.971);">60%</div>
<div class="a" style="left:96px;top:533.400px;width:832px;height:21.600px;background:#1f2c3a"></div>
<svg class="a" style="left:103.500px;top:539.600px" width="9.400" height="9.400" viewBox="0 0 10 10" fill="#fff"><path d="M0 1.400l4.200-.6v3.900H0zM4.800.7L10 0v4.700H4.800zM0 5.300h4.200v3.900L0 8.600zM4.800 5.300H10V10l-5.200-.7z"/></svg>
<div class="a" style="left:122.500px;top:533.400px;width:190px;height:21.600px;background:#c4c4c4"></div>
<svg class="a" style="left:128.500px;top:539.400px" width="9" height="9" viewBox="0 0 9 9" fill="none" stroke="#222" stroke-width="1"><circle cx="5.400" cy="3.400" r="2.700"/><path d="M3.400 5.400L.5 8.400"/></svg>
<div class="t" style="left:142.81px;top:541px;font-size:8px;color:#333;transform:scaleX(0.914);">ここに入力して検索</div>
<svg class="a" style="left:321px;top:539.500px" width="9.600" height="9.600" viewBox="0 0 9.600 9.600" fill="none" stroke="#fff" stroke-width="1.100"><circle cx="4.800" cy="4.800" r="3.700"/></svg>
<svg class="a" style="left:346.500px;top:540px" width="11" height="9" viewBox="0 0 11 9" fill="none" stroke="#fff" stroke-width=".9"><rect x="2.400" y="1.800" width="5.600" height="5.200"/><path d="M.6 1v6.800M9.900 1v1.600M9.900 4v3.800"/></svg>
<svg class="a" style="left:374.500px;top:538.300px" width="12.500" height="12.500" viewBox="0 0 12.500 12.500"><rect width="12.500" height="12.500" fill="#2a6fc0"/><path d="M0 12.500l4.200-5.500 2.600 3 2-2.200 3.700 4.700z" fill="#8fc4f2"/><rect y="0" width="12.500" height="4" fill="#1d4f91"/></svg>
<svg class="a" style="left:401.500px;top:539px" width="13" height="11" viewBox="0 0 13 11"><path d="M0 1h4.600l1.200 1.400H13V11H0z" fill="#f5b73c"/><path d="M0 4h13v7H0z" fill="#fbd26a"/><rect x="3" y="6.500" width="7" height="4.500" fill="#3b8ad9"/></svg>
<svg class="a" style="left:430px;top:537.800px" width="12.500" height="13" viewBox="0 0 12.500 13"><path d="M4 3V1.400h4.500V3" fill="none" stroke="#e8e8e8" stroke-width="1"/><path d="M.5 3.400h11.500l-.6 9.200H1.100z" fill="#e8e8e8"/><rect x="4" y="5.800" width="2" height="2" fill="#e74c3c"/><rect x="6.500" y="5.800" width="2" height="2" fill="#6ab04c"/><rect x="4" y="8.300" width="2" height="2" fill="#2e86de"/><rect x="6.500" y="8.300" width="2" height="2" fill="#f6b93b"/></svg>
<svg class="a" style="left:457.500px;top:538px" width="13" height="13" viewBox="0 0 13 13"><circle cx="6.500" cy="6.500" r="6.300" fill="#1e7fd0"/><path d="M.4 7.500C1 3 5 1 8.500 2.400c2.500 1 3.600 3 3.600 5H4.600c0 2 2 3.600 5.400 2.600-1 2-3.400 2.800-5.600 2.300C2 11.600.3 9.800.4 7.500z" fill="#4fd07a"/><path d="M4.600 7.400c.2-1.600 1.600-2.400 3-2 .9.300 1.300 1 1.300 2z" fill="#1f2c3a"/></svg>
<svg class="a" style="left:485.500px;top:538.600px" width="12" height="12" viewBox="0 0 12 12"><path d="M3 .8l8 1.200-2 9.400-8-1.400z" fill="#c9d3dc"/><path d="M3.600 2.600l5.800.9-1.200 5.800-5.800-.9z" fill="#6f8296"/></svg>
<svg class="a" style="left:541px;top:538px" width="12" height="13" viewBox="0 0 12 13"><path d="M6 0l1.500 4.200L12 3 8.600 6.300 11 10.500 6.800 8.600 5 13 4.400 8.300 0 8l3.600-2.400L1.600 1.600 5 4z" fill="#8e9fc4"/><path d="M4 3l5.500 6.300-2.500.2 1.200 2.700-1.200.5-1.200-2.700L4 11.600z" fill="#e8e8f0"/></svg>
<svg class="a" style="left:567.500px;top:538.600px" width="13.500" height="11.500" viewBox="0 0 13.500 11.500"><path d="M0 3.800L6.750 0l6.750 3.800v7.700H0z" fill="#1b6ec2"/><path d="M0 4.200l6.750 4 6.750-4v7.300H0z" fill="#3e9be8"/></svg>
<div class="a" style="left:590px;top:533.400px;width:24.500px;height:21.600px;background:#27343f"></div>
<svg class="a" style="left:597px;top:538.600px" width="10" height="12" viewBox="0 0 10 12"><path d="M2 0h4l4 5-4 7H2l4-7z" fill="#3fae7a"/><path d="M0 3h3l2 2.500L3 8H0l2-2.500z" fill="#8fe0b4"/></svg>
<div class="a" style="left:616.700px;top:533.400px;width:26.600px;height:21.600px;background:#3a4a58"></div>
<svg class="a" style="left:623px;top:538.400px" width="13" height="12" viewBox="0 0 13 12"><rect x="4" y=".5" width="9" height="11" rx="1" fill="#1e8f57"/><path d="M4 3.400h9M4 6.200h9M4 9h9M8.500.5v11" stroke="#157a48" stroke-width=".6"/><rect x="0" y="2.600" width="7" height="7" rx=".8" fill="#107c41"/><path d="M2 4.300l3 3.600M5 4.300L2 7.900" stroke="#fff" stroke-width=".9"/></svg>
<svg class="a" style="left:649.500px;top:538.400px" width="14" height="13" viewBox="0 0 14 13"><rect x="0" y="1.500" width="10" height="7.500" rx="1.500" fill="#3aa0e6"/><path d="M10 4l4-2v6.500l-4-2z" fill="#3aa0e6"/><circle cx="5" cy="5.200" r="2.200" fill="#e03b2f"/><path d="M5 9v2.500M2.500 12h5" stroke="#3aa0e6" stroke-width="1"/></svg>
<div class="a" style="left:590px;top:554px;width:24px;height:1px;background:#76b9ed"></div><div class="a" style="left:617px;top:554px;width:26px;height:1px;background:#76b9ed"></div><div class="a" style="left:645px;top:554px;width:22px;height:1px;background:#76b9ed"></div>
<div class="t" style="left:668.09px;top:538px;font-size:11.5px;color:rgba(255,255,255,.92);transform:scaleX(1.049);-webkit-text-stroke:.3px rgba(255,255,255,.9);">© 2021 saym</div>
<svg class="a" style="left:701.500px;top:540.500px" width="5" height="8" viewBox="0 0 5 8" fill="none" stroke="#e8e8e8" stroke-width=".9"><path d="M.4 2.800L2.500.6l2.100 2.200M2.500.8v6.800"/></svg>
<svg class="a" style="left:738px;top:540px" width="6" height="8" viewBox="0 0 6 8" fill="none" stroke="#d0d0d0" stroke-width=".9"><circle cx="3" cy="2.400" r="1.600"/><rect x="1" y="4.600" width="4" height="2.600"/></svg>
<svg class="a" style="left:735px;top:538px" width="110" height="13" viewBox="0 0 110 13" fill="none" stroke="#e8e8e8" stroke-width=".9"><rect x="18" y="4" width="7.500" height="4.600" fill="#cfcfcf" stroke="none"/><path d="M35 8.500h6a1.800 1.800 0 0 0 0-3.600 2.600 2.600 0 0 0-5-.4A2 2 0 0 0 35 8.500z" fill="#cfcfcf" stroke="none"/><circle cx="42" cy="8.600" r="2" fill="#e03b2f" stroke="none"/><rect x="55" y="3" width="8" height="5.400"/><path d="M57 10.400h4M59 8.400v2"/><path d="M74 9.400l4-4.400M73.500 7.500a1.600 1.600 0 1 0 2.400 2.200M76.500 4.800a1.600 1.600 0 1 1 2.300 2.200"/></svg>
<div class="t" style="left:826.800px;top:540px;font-size:8.500px;color:#eee;font-family:'Liberation Serif',serif;font-weight:bold">A</div>
<svg class="a" style="left:841px;top:539px" width="10" height="10" viewBox="0 0 10 10"><circle cx="4.600" cy="4.600" r="4.200" fill="#2d7de0"/><circle cx="7.600" cy="7.600" r="1.800" fill="#e6a23c"/></svg>
<div class="t" style="left:869.06px;top:536px;font-size:6.4px;color:#e8e8e8;transform:scaleX(0.977);">18:03</div>
<div class="t" style="left:859.88px;top:547px;font-size:6.4px;color:#e8e8e8;transform:scaleX(1.070);">2021/04/22</div>
<svg class="a" style="left:904.500px;top:540px" width="10" height="10" viewBox="0 0 10 10"><path d="M.5.500h9v6.600H6L4 9.300V7.100H.5z" fill="#d8d8d8"/><path d="M2.400 2.600h5.200M2.400 4.400h5.200" stroke="#555" stroke-width=".7"/><circle cx="8.200" cy="8" r="1.800" fill="none" stroke="#d8d8d8" stroke-width=".7"/></svg>
<div class="a" style="left:926.400px;top:533.400px;width:1px;height:21.600px;background:#5a6876"></div>
<div class="a" style="left:96px;top:449px;width:832px;height:106px;background:linear-gradient(180deg,rgba(0,0,0,0) 0.0%,rgba(0,0,0,0.03) 5.7%,rgba(0,0,0,0.08) 15.1%,rgba(0,0,0,0.15) 24.5%,rgba(0,0,0,0.23) 34.0%,rgba(0,0,0,0.31) 43.4%,rgba(0,0,0,0.385) 51.9%,rgba(0,0,0,0.44) 59.4%,rgba(0,0,0,0.49) 67.0%,rgba(0,0,0,0.535) 76.4%,rgba(0,0,0,0.575) 85.8%,rgba(0,0,0,0.62) 100.0%)"></div>
</div></div>
<div id="pl">
<svg class="a" style="left:8.400px;top:3px" width="10" height="10" viewBox="0 0 10 10" fill="none" stroke="#d4d4d4" stroke-width="1.100"><path d="M1.700 5.200h6.400M4.600 2.300L1.700 5.200l2.900 2.900"/></svg>
<svg class="a" style="left:955px;top:2px" width="66" height="14" viewBox="0 0 66 14" fill="none" stroke="#e0e0e0" stroke-width="1"><path d="M5.100 6.700h5.300"/><rect x="29.600" y="5.200" width="4.300" height="4.300" rx=".5"/><path d="M31 5.200V3.900h4.100v4.100H34"/><path d="M54.300 4l5.300 5.400M59.600 4l-5.300 5.400"/></svg>
<svg class="a" style="left:2px;top:268px" width="14" height="19" viewBox="0 0 14 19" fill="none" stroke="#c8c8c8" stroke-width="1"><path d="M9 3.200L2.600 9.500 9 15.800"/></svg>
<svg class="a" style="left:1008px;top:268px" width="14" height="19" viewBox="0 0 14 19" fill="none" stroke="#c8c8c8" stroke-width="1"><path d="M5 3.200l6.400 6.300L5 15.800"/></svg>
<div class="a" style="left:13px;top:503.300px;width:575px;height:1.400px;background:#52aeea"></div>
<div class="a" style="left:598.500px;top:503.700px;width:412.500px;height:1px;background:rgba(255,255,255,.32)"></div>
<div class="a" style="left:587.700px;top:498.700px;width:10.800px;height:10.800px;border-radius:50%;border:1.500px solid #52aeea"></div>
<div class="t" style="left:13.11px;top:513px;font-size:6px;color:#fff;transform:scaleX(0.964);">0:03:03</div>
<div class="t" style="left:991.11px;top:513px;font-size:6px;color:#fff;transform:scaleX(0.964);">0:02:09</div>
<svg class="a" style="left:19.500px;top:528px" width="13" height="12" viewBox="0 0 13 12" fill="none" stroke="#f2f2f2" stroke-width="1"><path d="M.9 4.200h1.900L5.400 1.600v8.800L2.800 7.800H.9z"/><path d="M7.600 4.200a2.600 2.600 0 0 1 0 3.600M9.200 2.600a4.800 4.800 0 0 1 0 6.800M10.900 1.200a6.800 6.800 0 0 1 0 9.600" stroke-width=".9"/></svg>
<svg class="a" style="left:46.500px;top:528.500px" width="13" height="11" viewBox="0 0 13 11" fill="none" stroke="#f2f2f2" stroke-width="1"><path d="M1 .8h10.200v7H4.400L2.400 10V7.800H1z"/><path d="M1 3.400h10.200" stroke-width="1.500"/></svg>
<div class="a" style="left:512.600px;top:537.700px;width:12.600px;height:12.600px;border-radius:50%;background:#80740a"></div>
<div class="a" style="left:508.200px;top:553.800px;width:22.400px;height:1.200px;background:#5f7d8e"></div>
<svg class="a" style="left:476px;top:526px" width="20" height="12" viewBox="476 526 20 12" fill="none" stroke="#f2f2f2" stroke-width="1.200"><path d="M480.600 532.800A5.300 5.300 0 0 1 490.700 533.300"/><path d="M479.900 530.300l.5 2.800 2.800-.5" stroke-width="1.100"/></svg>
<div class="t" style="left:482.21px;top:534px;font-size:6.8px;color:#fff;transform:scaleX(0.874);">10</div>
<svg class="a" style="left:506px;top:527px" width="13" height="14" viewBox="506 527 13 14" fill="none" stroke="#f2f2f2" stroke-width="1.100" stroke-linejoin="miter"><path d="M509.500 530.200l5.900 4.100-5.900 4.100z"/></svg>
<svg class="a" style="left:529px;top:526px" width="20" height="12" viewBox="529 526 20 12" fill="none" stroke="#f2f2f2" stroke-width="1.200"><path d="M543.100 532.800A5.300 5.300 0 0 0 533 533.300"/><path d="M543.800 530.300l-.5 2.800-2.800-.5" stroke-width="1.100"/></svg>
<div class="t" style="left:535.12px;top:534px;font-size:6.8px;color:#fff;transform:scaleX(0.900);">30</div>
<svg class="a" style="left:911.500px;top:527.500px" width="13" height="13" viewBox="0 0 13 13" fill="none" stroke="#f2f2f2" stroke-width="1"><path d="M1 12l.8-3L9.400 1.400a1.200 1.200 0 0 1 1.700 0l.5.500a1.200 1.200 0 0 1 0 1.700L4 11.200z"/><path d="M8.400 2.600l2 2"/></svg>
<svg class="a" style="left:937px;top:528px" width="15" height="12" viewBox="937 528 15 12" fill="none" stroke="#f2f2f2" stroke-width="1"><rect x="939.500" y="530.800" width="10" height="6.500"/><rect x="943.700" y="532.700" width="4.600" height="2.500" fill="#f2f2f2" stroke-width=".6"/></svg>
<svg class="a" style="left:964px;top:527px" width="15" height="15" viewBox="964 527 15 15" fill="none" stroke="#f2f2f2" stroke-width="1"><path d="M966.700 538.700L975.800 529.700M972.300 529.600h3.600v3.600M966.600 535.200v3.600h3.600"/></svg>
<svg class="a" style="left:992px;top:533px" width="12" height="3" viewBox="0 0 12 3" fill="#f2f2f2"><circle cx="1.600" cy="1.500" r=".75"/><circle cx="6" cy="1.500" r=".75"/><circle cx="10.400" cy="1.500" r=".75"/></svg>
</div>
</body></html>
